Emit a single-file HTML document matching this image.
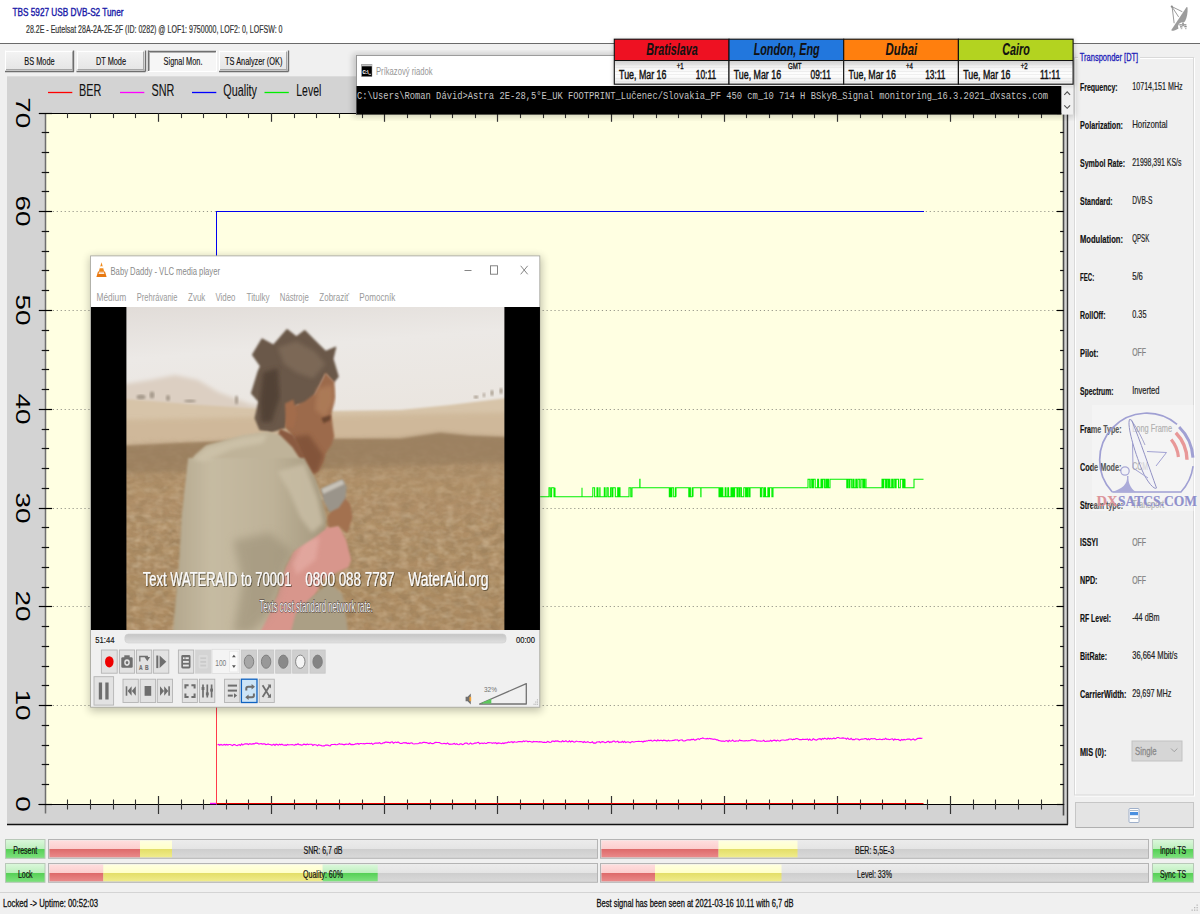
<!DOCTYPE html>
<html lang="sk"><head><meta charset="utf-8"><title>TBS 5927 USB DVB-S2 Tuner</title>
<style>
html,body{margin:0;padding:0;background:#f0f0f0;overflow:hidden}
body{width:1200px;height:914px;font-family:"Liberation Sans",sans-serif}
svg{display:block}
text{white-space:pre}
</style></head><body>
<svg width="1200" height="914" viewBox="0 0 1200 914">
<defs>
<linearGradient id="gbtn" x1="0" y1="0" x2="0" y2="1"><stop offset="0" stop-color="#f4f4f4"/><stop offset="1" stop-color="#e4e4e4"/></linearGradient>
<linearGradient id="ggreen" x1="0" y1="0" x2="0" y2="1"><stop offset="0" stop-color="#dcf8dc"/><stop offset="0.52" stop-color="#bcefbc"/><stop offset="0.52" stop-color="#56d056"/><stop offset="1" stop-color="#7ee27e"/></linearGradient>
<linearGradient id="pgrey" x1="0" y1="0" x2="0" y2="1"><stop offset="0" stop-color="#ececec"/><stop offset="0.52" stop-color="#e4e4e4"/><stop offset="0.52" stop-color="#cecece"/><stop offset="1" stop-color="#dadada"/></linearGradient>
<linearGradient id="pred" x1="0" y1="0" x2="0" y2="1"><stop offset="0" stop-color="#ffdede"/><stop offset="0.52" stop-color="#fbcdcd"/><stop offset="0.52" stop-color="#de6a6a"/><stop offset="1" stop-color="#ea8a8a"/></linearGradient>
<linearGradient id="pyel" x1="0" y1="0" x2="0" y2="1"><stop offset="0" stop-color="#ffffe0"/><stop offset="0.52" stop-color="#ffffc8"/><stop offset="0.52" stop-color="#e4de68"/><stop offset="1" stop-color="#f0ec8c"/></linearGradient>
<linearGradient id="pgrn" x1="0" y1="0" x2="0" y2="1"><stop offset="0" stop-color="#dcf8dc"/><stop offset="0.52" stop-color="#bcefbc"/><stop offset="0.52" stop-color="#56d056"/><stop offset="1" stop-color="#7ee27e"/></linearGradient>
<linearGradient id="gclk" x1="0" y1="0" x2="0" y2="1"><stop offset="0" stop-color="#c8c8c8"/><stop offset="0.3" stop-color="#f4f4f4"/><stop offset="0.6" stop-color="#ffffff"/><stop offset="1" stop-color="#e8e8e8"/></linearGradient>
<linearGradient id="gseek" x1="0" y1="0" x2="0" y2="1"><stop offset="0" stop-color="#c4c4c4"/><stop offset="1" stop-color="#e0e0e0"/></linearGradient>
<filter id="blur2" x="-10%" y="-10%" width="120%" height="120%"><feGaussianBlur stdDeviation="2"/></filter>
<filter id="blur1" x="-10%" y="-10%" width="120%" height="120%"><feGaussianBlur stdDeviation="1"/></filter>
<filter id="blur4" x="-20%" y="-20%" width="140%" height="140%"><feGaussianBlur stdDeviation="4"/></filter>
<filter id="shadow" x="-5%" y="-5%" width="110%" height="110%"><feGaussianBlur stdDeviation="3"/></filter>
<filter id="tsh" x="-5%" y="-20%" width="110%" height="150%"><feDropShadow dx="0.8" dy="0.8" stdDeviation="0.7" flood-color="#2a2018" flood-opacity="0.7"/></filter>
</defs>
<rect x="0.00" y="0.00" width="1200.00" height="914.00" fill="#f0f0f0" />
<rect x="0.00" y="0.00" width="1200.00" height="43.00" fill="#ffffff" />
<line x1="0.00" y1="43.50" x2="1200.00" y2="43.50" stroke="#6a6a6a" stroke-width="1" />
<text x="12.50" y="15.60" textLength="111.00" lengthAdjust="spacingAndGlyphs" fill="#1818a8" style='font-family:"Liberation Sans", sans-serif;font-size:11.3px;'  stroke="#1818a8" stroke-width="0.4">TBS 5927 USB DVB-S2 Tuner</text>
<text x="26.00" y="33.10" textLength="256.50" lengthAdjust="spacingAndGlyphs" fill="#333" style='font-family:"Liberation Sans", sans-serif;font-size:10.4px;'  stroke="#333" stroke-width="0.2">28.2E - Eutelsat 28A-2A-2E-2F (ID: 0282) @ LOF1: 9750000, LOF2: 0, LOFSW: 0</text>
<path d="M1186.6 7 L1187.6 7.6 C1187.8 13 1187 17.5 1185.2 21 L1178.5 28.4 C1176 30 1174 30.6 1171.8 30.8 L1171.3 30 Z" fill="#9c9c9c"/><g stroke="#8e8e8e" stroke-width="0.9" fill="none" stroke-linecap="round"><path d="M1171.9 6.6 L1182 11.6"/><path d="M1172.4 7.4 L1178.4 16.6"/><path d="M1172.2 7.5 L1174.1 22.8"/></g><circle cx="1171.8" cy="6.6" r="1.1" fill="#8a8a8a"/><ellipse cx="1183" cy="26.6" rx="5" ry="4.4" fill="#ffffff"/><g fill="#8e8e8e"><rect x="1179.3" y="24.2" width="2.6" height="1.3"/><rect x="1183.6" y="24.2" width="2.8" height="1.3"/><rect x="1180" y="26.2" width="2.4" height="1.3"/><rect x="1184.3" y="26" width="2.4" height="1.3"/><rect x="1182.2" y="22.6" width="1.6" height="3.6"/><rect x="1180.8" y="28" width="1.5" height="1.2" opacity="0.6"/><rect x="1185" y="28" width="1.5" height="1.2" opacity="0.6"/></g>
<rect x="5.00" y="50.50" width="69.00" height="21.00" fill="url(#gbtn)" />
<line x1="5.00" y1="51.50" x2="74.00" y2="51.50" stroke="#ffffff" stroke-width="1" />
<line x1="5.50" y1="50.50" x2="5.50" y2="71.50" stroke="#ffffff" stroke-width="1" />
<line x1="5.00" y1="71.50" x2="74.00" y2="71.50" stroke="#6e6e6e" stroke-width="1.4" />
<line x1="73.50" y1="50.50" x2="73.50" y2="71.50" stroke="#6e6e6e" stroke-width="1.4" />
<line x1="6.00" y1="69.50" x2="73.00" y2="69.50" stroke="#a8a8a8" stroke-width="1" />
<line x1="72.50" y1="51.50" x2="72.50" y2="70.50" stroke="#a8a8a8" stroke-width="1" />
<text x="24.35" y="64.70" textLength="30.29" lengthAdjust="spacingAndGlyphs" fill="#111" style='font-family:"Liberation Sans", sans-serif;font-size:10.3px;'  stroke="#111" stroke-width="0.15">BS Mode</text>
<rect x="76.50" y="50.50" width="69.00" height="21.00" fill="url(#gbtn)" />
<line x1="76.50" y1="51.50" x2="145.50" y2="51.50" stroke="#ffffff" stroke-width="1" />
<line x1="77.50" y1="50.50" x2="77.50" y2="71.50" stroke="#ffffff" stroke-width="1" />
<line x1="76.50" y1="71.50" x2="145.50" y2="71.50" stroke="#6e6e6e" stroke-width="1.4" />
<line x1="145.50" y1="50.50" x2="145.50" y2="71.50" stroke="#6e6e6e" stroke-width="1.4" />
<line x1="77.50" y1="69.50" x2="144.50" y2="69.50" stroke="#a8a8a8" stroke-width="1" />
<line x1="143.50" y1="51.50" x2="143.50" y2="70.50" stroke="#a8a8a8" stroke-width="1" />
<text x="95.92" y="64.70" textLength="30.15" lengthAdjust="spacingAndGlyphs" fill="#111" style='font-family:"Liberation Sans", sans-serif;font-size:10.3px;'  stroke="#111" stroke-width="0.15">DT Mode</text>
<rect x="148.00" y="50.50" width="68.50" height="21.00" fill="#f6f6f6" />
<line x1="148.00" y1="51.50" x2="216.50" y2="51.50" stroke="#707070" stroke-width="1.4" />
<line x1="148.50" y1="50.50" x2="148.50" y2="71.50" stroke="#707070" stroke-width="1.4" />
<line x1="148.00" y1="71.50" x2="216.50" y2="71.50" stroke="#ffffff" stroke-width="1" />
<line x1="216.50" y1="50.50" x2="216.50" y2="71.50" stroke="#ffffff" stroke-width="1" />
<line x1="149.50" y1="52.50" x2="215.50" y2="52.50" stroke="#b0b0b0" stroke-width="1" />
<line x1="149.50" y1="52.00" x2="149.50" y2="70.50" stroke="#b0b0b0" stroke-width="1" />
<text x="163.60" y="65.30" textLength="38.89" lengthAdjust="spacingAndGlyphs" fill="#111" style='font-family:"Liberation Sans", sans-serif;font-size:10.3px;'  stroke="#111" stroke-width="0.15">Signal Mon.</text>
<rect x="219.00" y="50.50" width="69.50" height="21.00" fill="url(#gbtn)" />
<line x1="219.00" y1="51.50" x2="288.50" y2="51.50" stroke="#ffffff" stroke-width="1" />
<line x1="219.50" y1="50.50" x2="219.50" y2="71.50" stroke="#ffffff" stroke-width="1" />
<line x1="219.00" y1="71.50" x2="288.50" y2="71.50" stroke="#6e6e6e" stroke-width="1.4" />
<line x1="288.50" y1="50.50" x2="288.50" y2="71.50" stroke="#6e6e6e" stroke-width="1.4" />
<line x1="220.00" y1="69.50" x2="287.50" y2="69.50" stroke="#a8a8a8" stroke-width="1" />
<line x1="286.50" y1="51.50" x2="286.50" y2="70.50" stroke="#a8a8a8" stroke-width="1" />
<text x="225.10" y="64.70" textLength="57.30" lengthAdjust="spacingAndGlyphs" fill="#111" style='font-family:"Liberation Sans", sans-serif;font-size:10.3px;'  stroke="#111" stroke-width="0.15">TS Analyzer (OK)</text>
<rect x="7.00" y="76.00" width="1060.50" height="748.50" fill="#d3d3d3" />
<line x1="7.00" y1="824.50" x2="1068.00" y2="824.50" stroke="#111" stroke-width="1.3" />
<line x1="1067.50" y1="76.00" x2="1067.50" y2="824.50" stroke="#333" stroke-width="1.4" />
<line x1="7.00" y1="76.50" x2="1067.50" y2="76.50" stroke="#dcdcdc" stroke-width="1" />
<rect x="45.30" y="113.30" width="1018.40" height="691.20" fill="#ffffe2" />
<line x1="52.80" y1="705.50" x2="1060.70" y2="705.50" stroke="#97978a" stroke-width="1" stroke-dasharray="1.2 2.75"/>
<line x1="52.80" y1="606.50" x2="1060.70" y2="606.50" stroke="#97978a" stroke-width="1" stroke-dasharray="1.2 2.75"/>
<line x1="52.80" y1="508.50" x2="1060.70" y2="508.50" stroke="#97978a" stroke-width="1" stroke-dasharray="1.2 2.75"/>
<line x1="52.80" y1="409.50" x2="1060.70" y2="409.50" stroke="#97978a" stroke-width="1" stroke-dasharray="1.2 2.75"/>
<line x1="52.80" y1="310.50" x2="1060.70" y2="310.50" stroke="#97978a" stroke-width="1" stroke-dasharray="1.2 2.75"/>
<line x1="52.80" y1="211.50" x2="1060.70" y2="211.50" stroke="#97978a" stroke-width="1" stroke-dasharray="1.2 2.75"/>
<line x1="48.00" y1="92.50" x2="72.30" y2="92.50" stroke="#ff0000" stroke-width="1.3" />
<text x="79.00" y="95.90" textLength="22.30" lengthAdjust="spacingAndGlyphs" fill="#111" style='font-family:"Liberation Sans", sans-serif;font-size:16.2px;'  stroke="#111" stroke-width="0.1">BER</text>
<line x1="120.00" y1="92.50" x2="144.30" y2="92.50" stroke="#ff00ff" stroke-width="1.3" />
<text x="151.50" y="95.90" textLength="22.80" lengthAdjust="spacingAndGlyphs" fill="#111" style='font-family:"Liberation Sans", sans-serif;font-size:16.2px;'  stroke="#111" stroke-width="0.1">SNR</text>
<line x1="192.00" y1="92.50" x2="216.30" y2="92.50" stroke="#0000ff" stroke-width="1.3" />
<text x="223.30" y="95.90" textLength="33.70" lengthAdjust="spacingAndGlyphs" fill="#111" style='font-family:"Liberation Sans", sans-serif;font-size:16.2px;'  stroke="#111" stroke-width="0.1">Quality</text>
<line x1="264.50" y1="92.50" x2="288.80" y2="92.50" stroke="#00ee00" stroke-width="1.3" />
<text x="296.30" y="95.90" textLength="25.00" lengthAdjust="spacingAndGlyphs" fill="#111" style='font-family:"Liberation Sans", sans-serif;font-size:16.2px;'  stroke="#111" stroke-width="0.1">Level</text>
<line x1="39.00" y1="113.50" x2="1064.20" y2="113.50" stroke="#000" stroke-width="1.1" />
<line x1="38.50" y1="804.50" x2="1064.20" y2="804.50" stroke="#000" stroke-width="1.1" />
<line x1="45.50" y1="113.30" x2="45.50" y2="813.50" stroke="#6e6e6e" stroke-width="1.5" />
<line x1="1063.50" y1="113.30" x2="1063.50" y2="815.50" stroke="#4a4a4a" stroke-width="1.6" />
<line x1="67.50" y1="799.50" x2="67.50" y2="809.50" stroke="#333" stroke-width="1.1" />
<line x1="67.50" y1="113.30" x2="67.50" y2="118.10" stroke="#333" stroke-width="1.1" />
<line x1="90.50" y1="799.50" x2="90.50" y2="809.50" stroke="#333" stroke-width="1.1" />
<line x1="90.50" y1="113.30" x2="90.50" y2="118.10" stroke="#333" stroke-width="1.1" />
<line x1="113.50" y1="799.50" x2="113.50" y2="809.50" stroke="#333" stroke-width="1.1" />
<line x1="113.50" y1="113.30" x2="113.50" y2="118.10" stroke="#333" stroke-width="1.1" />
<line x1="135.50" y1="799.50" x2="135.50" y2="809.50" stroke="#333" stroke-width="1.1" />
<line x1="135.50" y1="113.30" x2="135.50" y2="118.10" stroke="#333" stroke-width="1.1" />
<line x1="158.50" y1="796.00" x2="158.50" y2="814.00" stroke="#333" stroke-width="1.2" />
<line x1="158.50" y1="113.30" x2="158.50" y2="121.80" stroke="#333" stroke-width="1.2" />
<line x1="181.50" y1="799.50" x2="181.50" y2="809.50" stroke="#333" stroke-width="1.1" />
<line x1="181.50" y1="113.30" x2="181.50" y2="118.10" stroke="#333" stroke-width="1.1" />
<line x1="203.50" y1="799.50" x2="203.50" y2="809.50" stroke="#333" stroke-width="1.1" />
<line x1="203.50" y1="113.30" x2="203.50" y2="118.10" stroke="#333" stroke-width="1.1" />
<line x1="226.50" y1="799.50" x2="226.50" y2="809.50" stroke="#333" stroke-width="1.1" />
<line x1="226.50" y1="113.30" x2="226.50" y2="118.10" stroke="#333" stroke-width="1.1" />
<line x1="248.50" y1="799.50" x2="248.50" y2="809.50" stroke="#333" stroke-width="1.1" />
<line x1="248.50" y1="113.30" x2="248.50" y2="118.10" stroke="#333" stroke-width="1.1" />
<line x1="271.50" y1="796.00" x2="271.50" y2="814.00" stroke="#333" stroke-width="1.2" />
<line x1="271.50" y1="113.30" x2="271.50" y2="121.80" stroke="#333" stroke-width="1.2" />
<line x1="294.50" y1="799.50" x2="294.50" y2="809.50" stroke="#333" stroke-width="1.1" />
<line x1="294.50" y1="113.30" x2="294.50" y2="118.10" stroke="#333" stroke-width="1.1" />
<line x1="316.50" y1="799.50" x2="316.50" y2="809.50" stroke="#333" stroke-width="1.1" />
<line x1="316.50" y1="113.30" x2="316.50" y2="118.10" stroke="#333" stroke-width="1.1" />
<line x1="339.50" y1="799.50" x2="339.50" y2="809.50" stroke="#333" stroke-width="1.1" />
<line x1="339.50" y1="113.30" x2="339.50" y2="118.10" stroke="#333" stroke-width="1.1" />
<line x1="362.50" y1="799.50" x2="362.50" y2="809.50" stroke="#333" stroke-width="1.1" />
<line x1="362.50" y1="113.30" x2="362.50" y2="118.10" stroke="#333" stroke-width="1.1" />
<line x1="384.50" y1="796.00" x2="384.50" y2="814.00" stroke="#333" stroke-width="1.2" />
<line x1="384.50" y1="113.30" x2="384.50" y2="121.80" stroke="#333" stroke-width="1.2" />
<line x1="407.50" y1="799.50" x2="407.50" y2="809.50" stroke="#333" stroke-width="1.1" />
<line x1="407.50" y1="113.30" x2="407.50" y2="118.10" stroke="#333" stroke-width="1.1" />
<line x1="430.50" y1="799.50" x2="430.50" y2="809.50" stroke="#333" stroke-width="1.1" />
<line x1="430.50" y1="113.30" x2="430.50" y2="118.10" stroke="#333" stroke-width="1.1" />
<line x1="452.50" y1="799.50" x2="452.50" y2="809.50" stroke="#333" stroke-width="1.1" />
<line x1="452.50" y1="113.30" x2="452.50" y2="118.10" stroke="#333" stroke-width="1.1" />
<line x1="475.50" y1="799.50" x2="475.50" y2="809.50" stroke="#333" stroke-width="1.1" />
<line x1="475.50" y1="113.30" x2="475.50" y2="118.10" stroke="#333" stroke-width="1.1" />
<line x1="497.50" y1="796.00" x2="497.50" y2="814.00" stroke="#333" stroke-width="1.2" />
<line x1="497.50" y1="113.30" x2="497.50" y2="121.80" stroke="#333" stroke-width="1.2" />
<line x1="520.50" y1="799.50" x2="520.50" y2="809.50" stroke="#333" stroke-width="1.1" />
<line x1="520.50" y1="113.30" x2="520.50" y2="118.10" stroke="#333" stroke-width="1.1" />
<line x1="543.50" y1="799.50" x2="543.50" y2="809.50" stroke="#333" stroke-width="1.1" />
<line x1="543.50" y1="113.30" x2="543.50" y2="118.10" stroke="#333" stroke-width="1.1" />
<line x1="565.50" y1="799.50" x2="565.50" y2="809.50" stroke="#333" stroke-width="1.1" />
<line x1="565.50" y1="113.30" x2="565.50" y2="118.10" stroke="#333" stroke-width="1.1" />
<line x1="588.50" y1="799.50" x2="588.50" y2="809.50" stroke="#333" stroke-width="1.1" />
<line x1="588.50" y1="113.30" x2="588.50" y2="118.10" stroke="#333" stroke-width="1.1" />
<line x1="611.50" y1="796.00" x2="611.50" y2="814.00" stroke="#333" stroke-width="1.2" />
<line x1="611.50" y1="113.30" x2="611.50" y2="121.80" stroke="#333" stroke-width="1.2" />
<line x1="633.50" y1="799.50" x2="633.50" y2="809.50" stroke="#333" stroke-width="1.1" />
<line x1="633.50" y1="113.30" x2="633.50" y2="118.10" stroke="#333" stroke-width="1.1" />
<line x1="656.50" y1="799.50" x2="656.50" y2="809.50" stroke="#333" stroke-width="1.1" />
<line x1="656.50" y1="113.30" x2="656.50" y2="118.10" stroke="#333" stroke-width="1.1" />
<line x1="678.50" y1="799.50" x2="678.50" y2="809.50" stroke="#333" stroke-width="1.1" />
<line x1="678.50" y1="113.30" x2="678.50" y2="118.10" stroke="#333" stroke-width="1.1" />
<line x1="701.50" y1="799.50" x2="701.50" y2="809.50" stroke="#333" stroke-width="1.1" />
<line x1="701.50" y1="113.30" x2="701.50" y2="118.10" stroke="#333" stroke-width="1.1" />
<line x1="724.50" y1="796.00" x2="724.50" y2="814.00" stroke="#333" stroke-width="1.2" />
<line x1="724.50" y1="113.30" x2="724.50" y2="121.80" stroke="#333" stroke-width="1.2" />
<line x1="746.50" y1="799.50" x2="746.50" y2="809.50" stroke="#333" stroke-width="1.1" />
<line x1="746.50" y1="113.30" x2="746.50" y2="118.10" stroke="#333" stroke-width="1.1" />
<line x1="769.50" y1="799.50" x2="769.50" y2="809.50" stroke="#333" stroke-width="1.1" />
<line x1="769.50" y1="113.30" x2="769.50" y2="118.10" stroke="#333" stroke-width="1.1" />
<line x1="792.50" y1="799.50" x2="792.50" y2="809.50" stroke="#333" stroke-width="1.1" />
<line x1="792.50" y1="113.30" x2="792.50" y2="118.10" stroke="#333" stroke-width="1.1" />
<line x1="814.50" y1="799.50" x2="814.50" y2="809.50" stroke="#333" stroke-width="1.1" />
<line x1="814.50" y1="113.30" x2="814.50" y2="118.10" stroke="#333" stroke-width="1.1" />
<line x1="837.50" y1="796.00" x2="837.50" y2="814.00" stroke="#333" stroke-width="1.2" />
<line x1="837.50" y1="113.30" x2="837.50" y2="121.80" stroke="#333" stroke-width="1.2" />
<line x1="860.50" y1="799.50" x2="860.50" y2="809.50" stroke="#333" stroke-width="1.1" />
<line x1="860.50" y1="113.30" x2="860.50" y2="118.10" stroke="#333" stroke-width="1.1" />
<line x1="882.50" y1="799.50" x2="882.50" y2="809.50" stroke="#333" stroke-width="1.1" />
<line x1="882.50" y1="113.30" x2="882.50" y2="118.10" stroke="#333" stroke-width="1.1" />
<line x1="905.50" y1="799.50" x2="905.50" y2="809.50" stroke="#333" stroke-width="1.1" />
<line x1="905.50" y1="113.30" x2="905.50" y2="118.10" stroke="#333" stroke-width="1.1" />
<line x1="927.50" y1="799.50" x2="927.50" y2="809.50" stroke="#333" stroke-width="1.1" />
<line x1="927.50" y1="113.30" x2="927.50" y2="118.10" stroke="#333" stroke-width="1.1" />
<line x1="950.50" y1="796.00" x2="950.50" y2="814.00" stroke="#333" stroke-width="1.2" />
<line x1="950.50" y1="113.30" x2="950.50" y2="121.80" stroke="#333" stroke-width="1.2" />
<line x1="973.50" y1="799.50" x2="973.50" y2="809.50" stroke="#333" stroke-width="1.1" />
<line x1="973.50" y1="113.30" x2="973.50" y2="118.10" stroke="#333" stroke-width="1.1" />
<line x1="995.50" y1="799.50" x2="995.50" y2="809.50" stroke="#333" stroke-width="1.1" />
<line x1="995.50" y1="113.30" x2="995.50" y2="118.10" stroke="#333" stroke-width="1.1" />
<line x1="1018.50" y1="799.50" x2="1018.50" y2="809.50" stroke="#333" stroke-width="1.1" />
<line x1="1018.50" y1="113.30" x2="1018.50" y2="118.10" stroke="#333" stroke-width="1.1" />
<line x1="1041.50" y1="799.50" x2="1041.50" y2="809.50" stroke="#333" stroke-width="1.1" />
<line x1="1041.50" y1="113.30" x2="1041.50" y2="118.10" stroke="#333" stroke-width="1.1" />
<line x1="38.80" y1="804.50" x2="52.10" y2="804.50" stroke="#000" stroke-width="1.2" />
<line x1="1056.70" y1="804.50" x2="1063.70" y2="804.50" stroke="#000" stroke-width="1.2" />
<line x1="41.70" y1="784.50" x2="49.10" y2="784.50" stroke="#111" stroke-width="1.2" />
<line x1="1060.10" y1="784.50" x2="1063.70" y2="784.50" stroke="#111" stroke-width="1.2" />
<line x1="41.70" y1="764.50" x2="49.10" y2="764.50" stroke="#111" stroke-width="1.2" />
<line x1="1060.10" y1="764.50" x2="1063.70" y2="764.50" stroke="#111" stroke-width="1.2" />
<line x1="41.70" y1="745.50" x2="49.10" y2="745.50" stroke="#111" stroke-width="1.2" />
<line x1="1060.10" y1="745.50" x2="1063.70" y2="745.50" stroke="#111" stroke-width="1.2" />
<line x1="41.70" y1="725.50" x2="49.10" y2="725.50" stroke="#111" stroke-width="1.2" />
<line x1="1060.10" y1="725.50" x2="1063.70" y2="725.50" stroke="#111" stroke-width="1.2" />
<line x1="38.80" y1="705.50" x2="52.10" y2="705.50" stroke="#000" stroke-width="1.2" />
<line x1="1056.70" y1="705.50" x2="1063.70" y2="705.50" stroke="#000" stroke-width="1.2" />
<line x1="41.70" y1="685.50" x2="49.10" y2="685.50" stroke="#111" stroke-width="1.2" />
<line x1="1060.10" y1="685.50" x2="1063.70" y2="685.50" stroke="#111" stroke-width="1.2" />
<line x1="41.70" y1="666.50" x2="49.10" y2="666.50" stroke="#111" stroke-width="1.2" />
<line x1="1060.10" y1="666.50" x2="1063.70" y2="666.50" stroke="#111" stroke-width="1.2" />
<line x1="41.70" y1="646.50" x2="49.10" y2="646.50" stroke="#111" stroke-width="1.2" />
<line x1="1060.10" y1="646.50" x2="1063.70" y2="646.50" stroke="#111" stroke-width="1.2" />
<line x1="41.70" y1="626.50" x2="49.10" y2="626.50" stroke="#111" stroke-width="1.2" />
<line x1="1060.10" y1="626.50" x2="1063.70" y2="626.50" stroke="#111" stroke-width="1.2" />
<line x1="38.80" y1="606.50" x2="52.10" y2="606.50" stroke="#000" stroke-width="1.2" />
<line x1="1056.70" y1="606.50" x2="1063.70" y2="606.50" stroke="#000" stroke-width="1.2" />
<line x1="41.70" y1="587.50" x2="49.10" y2="587.50" stroke="#111" stroke-width="1.2" />
<line x1="1060.10" y1="587.50" x2="1063.70" y2="587.50" stroke="#111" stroke-width="1.2" />
<line x1="41.70" y1="567.50" x2="49.10" y2="567.50" stroke="#111" stroke-width="1.2" />
<line x1="1060.10" y1="567.50" x2="1063.70" y2="567.50" stroke="#111" stroke-width="1.2" />
<line x1="41.70" y1="547.50" x2="49.10" y2="547.50" stroke="#111" stroke-width="1.2" />
<line x1="1060.10" y1="547.50" x2="1063.70" y2="547.50" stroke="#111" stroke-width="1.2" />
<line x1="41.70" y1="527.50" x2="49.10" y2="527.50" stroke="#111" stroke-width="1.2" />
<line x1="1060.10" y1="527.50" x2="1063.70" y2="527.50" stroke="#111" stroke-width="1.2" />
<line x1="38.80" y1="508.50" x2="52.10" y2="508.50" stroke="#000" stroke-width="1.2" />
<line x1="1056.70" y1="508.50" x2="1063.70" y2="508.50" stroke="#000" stroke-width="1.2" />
<line x1="41.70" y1="488.50" x2="49.10" y2="488.50" stroke="#111" stroke-width="1.2" />
<line x1="1060.10" y1="488.50" x2="1063.70" y2="488.50" stroke="#111" stroke-width="1.2" />
<line x1="41.70" y1="468.50" x2="49.10" y2="468.50" stroke="#111" stroke-width="1.2" />
<line x1="1060.10" y1="468.50" x2="1063.70" y2="468.50" stroke="#111" stroke-width="1.2" />
<line x1="41.70" y1="448.50" x2="49.10" y2="448.50" stroke="#111" stroke-width="1.2" />
<line x1="1060.10" y1="448.50" x2="1063.70" y2="448.50" stroke="#111" stroke-width="1.2" />
<line x1="41.70" y1="429.50" x2="49.10" y2="429.50" stroke="#111" stroke-width="1.2" />
<line x1="1060.10" y1="429.50" x2="1063.70" y2="429.50" stroke="#111" stroke-width="1.2" />
<line x1="38.80" y1="409.50" x2="52.10" y2="409.50" stroke="#000" stroke-width="1.2" />
<line x1="1056.70" y1="409.50" x2="1063.70" y2="409.50" stroke="#000" stroke-width="1.2" />
<line x1="41.70" y1="389.50" x2="49.10" y2="389.50" stroke="#111" stroke-width="1.2" />
<line x1="1060.10" y1="389.50" x2="1063.70" y2="389.50" stroke="#111" stroke-width="1.2" />
<line x1="41.70" y1="369.50" x2="49.10" y2="369.50" stroke="#111" stroke-width="1.2" />
<line x1="1060.10" y1="369.50" x2="1063.70" y2="369.50" stroke="#111" stroke-width="1.2" />
<line x1="41.70" y1="350.50" x2="49.10" y2="350.50" stroke="#111" stroke-width="1.2" />
<line x1="1060.10" y1="350.50" x2="1063.70" y2="350.50" stroke="#111" stroke-width="1.2" />
<line x1="41.70" y1="330.50" x2="49.10" y2="330.50" stroke="#111" stroke-width="1.2" />
<line x1="1060.10" y1="330.50" x2="1063.70" y2="330.50" stroke="#111" stroke-width="1.2" />
<line x1="38.80" y1="310.50" x2="52.10" y2="310.50" stroke="#000" stroke-width="1.2" />
<line x1="1056.70" y1="310.50" x2="1063.70" y2="310.50" stroke="#000" stroke-width="1.2" />
<line x1="41.70" y1="290.50" x2="49.10" y2="290.50" stroke="#111" stroke-width="1.2" />
<line x1="1060.10" y1="290.50" x2="1063.70" y2="290.50" stroke="#111" stroke-width="1.2" />
<line x1="41.70" y1="270.50" x2="49.10" y2="270.50" stroke="#111" stroke-width="1.2" />
<line x1="1060.10" y1="270.50" x2="1063.70" y2="270.50" stroke="#111" stroke-width="1.2" />
<line x1="41.70" y1="251.50" x2="49.10" y2="251.50" stroke="#111" stroke-width="1.2" />
<line x1="1060.10" y1="251.50" x2="1063.70" y2="251.50" stroke="#111" stroke-width="1.2" />
<line x1="41.70" y1="231.50" x2="49.10" y2="231.50" stroke="#111" stroke-width="1.2" />
<line x1="1060.10" y1="231.50" x2="1063.70" y2="231.50" stroke="#111" stroke-width="1.2" />
<line x1="38.80" y1="211.50" x2="52.10" y2="211.50" stroke="#000" stroke-width="1.2" />
<line x1="1056.70" y1="211.50" x2="1063.70" y2="211.50" stroke="#000" stroke-width="1.2" />
<line x1="41.70" y1="191.50" x2="49.10" y2="191.50" stroke="#111" stroke-width="1.2" />
<line x1="1060.10" y1="191.50" x2="1063.70" y2="191.50" stroke="#111" stroke-width="1.2" />
<line x1="41.70" y1="172.50" x2="49.10" y2="172.50" stroke="#111" stroke-width="1.2" />
<line x1="1060.10" y1="172.50" x2="1063.70" y2="172.50" stroke="#111" stroke-width="1.2" />
<line x1="41.70" y1="152.50" x2="49.10" y2="152.50" stroke="#111" stroke-width="1.2" />
<line x1="1060.10" y1="152.50" x2="1063.70" y2="152.50" stroke="#111" stroke-width="1.2" />
<line x1="41.70" y1="132.50" x2="49.10" y2="132.50" stroke="#111" stroke-width="1.2" />
<line x1="1060.10" y1="132.50" x2="1063.70" y2="132.50" stroke="#111" stroke-width="1.2" />
<line x1="38.80" y1="113.50" x2="52.10" y2="113.50" stroke="#000" stroke-width="1.2" />
<line x1="1056.70" y1="113.50" x2="1063.70" y2="113.50" stroke="#000" stroke-width="1.2" />
<text transform="translate(15.75,804.00) rotate(90)" x="-7.75" y="0" textLength="15.50" lengthAdjust="spacingAndGlyphs" fill="#000" style='font-family:"Liberation Sans",sans-serif;font-size:19.4px'>0</text>
<text transform="translate(15.75,705.00) rotate(90)" x="-15.50" y="0" textLength="31.00" lengthAdjust="spacingAndGlyphs" fill="#000" style='font-family:"Liberation Sans",sans-serif;font-size:19.4px'>10</text>
<text transform="translate(15.75,606.00) rotate(90)" x="-15.50" y="0" textLength="31.00" lengthAdjust="spacingAndGlyphs" fill="#000" style='font-family:"Liberation Sans",sans-serif;font-size:19.4px'>20</text>
<text transform="translate(15.75,508.00) rotate(90)" x="-15.50" y="0" textLength="31.00" lengthAdjust="spacingAndGlyphs" fill="#000" style='font-family:"Liberation Sans",sans-serif;font-size:19.4px'>30</text>
<text transform="translate(15.75,409.00) rotate(90)" x="-15.50" y="0" textLength="31.00" lengthAdjust="spacingAndGlyphs" fill="#000" style='font-family:"Liberation Sans",sans-serif;font-size:19.4px'>40</text>
<text transform="translate(15.75,310.00) rotate(90)" x="-15.50" y="0" textLength="31.00" lengthAdjust="spacingAndGlyphs" fill="#000" style='font-family:"Liberation Sans",sans-serif;font-size:19.4px'>50</text>
<text transform="translate(15.75,211.00) rotate(90)" x="-15.50" y="0" textLength="31.00" lengthAdjust="spacingAndGlyphs" fill="#000" style='font-family:"Liberation Sans",sans-serif;font-size:19.4px'>60</text>
<text transform="translate(15.75,112.80) rotate(90)" x="-15.50" y="0" textLength="31.00" lengthAdjust="spacingAndGlyphs" fill="#000" style='font-family:"Liberation Sans",sans-serif;font-size:19.4px'>70</text>
<line x1="216.50" y1="803.50" x2="923.50" y2="803.50" stroke="#e80000" stroke-width="1.0" />
<line x1="210.00" y1="803.50" x2="216.50" y2="803.50" stroke="#ff00ff" stroke-width="1.4" />
<polyline points="216.5,804.5 216.5,211.50 923.5,211.50" fill="none" stroke="#0000f0" stroke-width="1" shape-rendering="crispEdges"/>
<line x1="216.50" y1="400.00" x2="216.50" y2="804.50" stroke="#ff3a4a" stroke-width="1.0" />
<polyline points="217.5,744.72 218.7,744.47 219.8,745.23 221.0,744.37 222.1,745.09 223.3,744.85 224.4,744.41 225.6,745.10 226.7,744.41 227.9,745.02 229.0,744.48 230.2,744.51 231.3,745.00 232.5,745.58 233.6,744.50 234.8,744.61 235.9,745.18 237.1,745.60 238.2,744.98 239.4,744.64 240.5,745.44 241.7,743.96 242.8,745.09 244.0,744.15 245.1,743.85 246.3,743.72 247.4,743.92 248.6,744.60 249.7,743.58 250.9,744.12 252.0,744.15 253.2,743.70 254.3,743.93 255.5,743.18 256.6,743.16 257.8,743.38 258.9,744.11 260.1,743.75 261.2,743.62 262.4,744.07 263.5,743.93 264.7,743.76 265.8,744.57 266.9,744.50 268.1,743.89 269.2,744.46 270.4,744.46 271.5,745.06 272.7,744.91 273.8,744.31 275.0,745.40 276.1,744.15 277.3,744.64 278.4,745.18 279.6,744.29 280.7,744.80 281.9,744.13 283.0,745.06 284.2,745.19 285.3,744.88 286.5,745.30 287.6,744.42 288.8,744.96 289.9,744.76 291.1,744.70 292.2,744.48 293.4,745.02 294.5,745.14 295.7,744.41 296.8,744.68 298.0,743.76 299.1,744.72 300.3,744.65 301.4,745.18 302.6,744.95 303.7,744.18 304.9,744.38 306.0,744.86 307.2,743.95 308.3,744.67 309.5,744.30 310.6,744.29 311.8,744.28 312.9,745.42 314.1,744.53 315.2,744.77 316.4,745.05 317.5,745.82 318.7,744.68 319.8,745.26 321.0,745.43 322.1,745.95 323.3,745.85 324.4,745.90 325.6,745.00 326.7,745.17 327.9,745.03 329.0,745.76 330.2,745.81 331.3,744.52 332.5,744.48 333.6,744.48 334.8,744.39 335.9,744.68 337.1,744.74 338.2,744.16 339.4,743.69 340.5,744.24 341.7,744.09 342.8,744.32 344.0,744.84 345.1,744.40 346.3,744.10 347.4,744.22 348.6,744.29 349.7,743.35 350.9,744.61 352.0,744.44 353.2,744.59 354.3,744.49 355.5,743.90 356.6,743.93 357.8,743.50 358.9,744.32 360.1,743.47 361.2,743.49 362.4,743.71 363.5,743.63 364.7,743.89 365.8,743.44 367.0,743.33 368.1,743.51 369.3,743.39 370.4,743.72 371.6,743.14 372.7,744.34 373.9,743.86 375.0,743.07 376.2,743.13 377.3,743.18 378.5,743.10 379.6,742.64 380.8,743.63 381.9,743.75 383.1,742.87 384.2,742.81 385.4,742.14 386.5,742.10 387.7,742.41 388.8,742.25 390.0,743.06 391.1,742.04 392.3,741.83 393.4,743.22 394.6,742.60 395.7,742.06 396.9,742.69 398.0,741.96 399.2,742.76 400.3,743.49 401.5,743.38 402.6,743.19 403.8,742.59 404.9,742.81 406.1,742.57 407.2,743.53 408.4,743.21 409.5,743.62 410.7,742.98 411.8,742.84 413.0,743.73 414.1,743.99 415.3,743.79 416.4,743.71 417.6,743.70 418.7,743.56 419.9,742.75 421.0,743.15 422.2,742.86 423.3,742.33 424.5,742.28 425.6,742.62 426.8,742.55 427.9,743.17 429.1,743.53 430.2,742.75 431.4,743.47 432.5,743.55 433.7,743.50 434.8,742.64 436.0,742.45 437.1,742.50 438.3,742.50 439.4,742.57 440.6,743.26 441.7,743.75 442.9,743.74 444.0,743.28 445.2,743.62 446.3,743.92 447.5,742.93 448.6,743.88 449.8,744.32 450.9,744.20 452.1,744.21 453.2,743.86 454.4,743.45 455.5,744.40 456.7,743.73 457.8,744.44 459.0,744.69 460.1,743.81 461.3,743.79 462.4,744.57 463.6,744.19 464.7,743.30 465.9,743.17 467.0,743.14 468.2,744.20 469.3,743.98 470.5,742.91 471.6,743.86 472.8,744.02 473.9,743.47 475.1,742.95 476.2,743.19 477.4,742.52 478.5,742.30 479.7,743.71 480.8,743.21 482.0,743.01 483.1,743.62 484.3,742.87 485.4,743.54 486.6,743.49 487.7,742.59 488.9,742.68 490.0,742.76 491.2,742.71 492.3,743.25 493.5,742.78 494.6,743.04 495.8,742.62 496.9,743.79 498.1,742.95 499.2,743.09 500.4,743.25 501.5,743.69 502.7,742.92 503.8,743.61 505.0,742.91 506.1,742.88 507.3,742.78 508.4,741.93 509.6,742.46 510.7,741.97 511.9,741.59 513.0,742.68 514.2,741.63 515.3,741.97 516.5,742.25 517.6,741.90 518.8,741.47 519.9,741.67 521.1,741.66 522.2,741.94 523.4,740.87 524.5,741.52 525.7,741.03 526.8,741.05 528.0,741.79 529.1,741.40 530.3,741.50 531.4,741.82 532.6,742.09 533.7,741.42 534.9,741.71 536.0,741.60 537.2,741.65 538.3,741.97 539.5,741.65 540.6,741.81 541.8,741.75 542.9,742.47 544.1,742.13 545.2,742.40 546.4,742.50 547.5,741.47 548.7,741.90 549.8,742.46 551.0,742.27 552.1,741.17 553.3,741.11 554.4,741.54 555.6,740.93 556.7,741.13 557.9,740.82 559.0,741.67 560.2,741.79 561.3,741.91 562.5,740.76 563.6,741.58 564.8,741.47 565.9,740.68 567.1,741.79 568.2,741.93 569.4,740.83 570.5,741.96 571.7,741.17 572.8,741.36 574.0,742.18 575.1,742.01 576.3,741.08 577.4,741.57 578.6,741.78 579.7,741.61 580.9,741.48 582.0,741.75 583.2,742.44 584.3,741.46 585.5,742.34 586.6,742.23 587.8,741.65 588.9,742.17 590.1,742.64 591.2,742.49 592.4,741.83 593.5,743.21 594.7,742.91 595.8,743.16 597.0,741.83 598.1,742.03 599.3,741.65 600.4,742.70 601.6,741.89 602.7,741.62 603.9,742.00 605.0,742.67 606.2,742.48 607.3,741.58 608.5,741.37 609.6,742.49 610.8,741.93 611.9,742.10 613.1,741.17 614.2,741.11 615.4,742.06 616.5,741.68 617.7,741.16 618.8,742.49 620.0,742.06 621.1,742.34 622.3,741.30 623.4,742.50 624.6,741.36 625.7,742.59 626.9,742.01 628.0,741.87 629.2,742.21 630.3,742.79 631.5,741.80 632.6,741.59 633.8,742.17 634.9,741.71 636.1,741.48 637.2,741.51 638.4,741.29 639.5,741.44 640.7,741.53 641.8,741.43 643.0,742.01 644.1,741.21 645.3,741.41 646.4,740.82 647.6,740.96 648.7,740.36 649.9,740.60 651.0,740.15 652.2,741.13 653.3,740.77 654.5,740.14 655.6,740.50 656.8,741.13 657.9,739.84 659.1,740.87 660.2,740.26 661.4,740.33 662.5,740.84 663.7,740.18 664.8,740.36 666.0,740.64 667.1,741.11 668.3,740.18 669.4,740.94 670.6,740.78 671.7,740.71 672.9,740.39 674.0,740.32 675.2,739.90 676.3,740.03 677.5,739.94 678.6,740.95 679.8,740.21 680.9,740.05 682.1,739.90 683.2,741.00 684.4,740.99 685.5,740.64 686.7,740.00 687.8,739.88 689.0,739.89 690.1,740.05 691.3,739.41 692.4,739.66 693.6,739.20 694.7,740.08 695.9,739.94 697.0,739.17 698.2,738.59 699.3,739.57 700.5,738.51 701.6,738.53 702.8,737.97 703.9,738.54 705.1,738.70 706.2,738.80 707.4,738.42 708.5,738.97 709.7,738.34 710.8,738.87 712.0,738.77 713.1,739.40 714.3,739.05 715.4,739.21 716.6,739.82 717.7,739.91 718.9,740.63 720.0,740.73 721.2,741.13 722.3,741.04 723.5,741.17 724.6,741.44 725.8,740.73 726.9,740.65 728.1,741.63 729.2,740.37 730.4,741.21 731.5,741.07 732.7,740.13 733.8,741.28 735.0,741.32 736.1,740.88 737.3,740.99 738.4,741.06 739.6,740.01 740.7,740.55 741.9,740.48 743.0,740.95 744.2,740.88 745.3,740.90 746.5,740.53 747.6,741.00 748.8,740.70 749.9,740.74 751.1,740.07 752.2,739.81 753.4,740.01 754.5,740.40 755.7,740.07 756.8,741.22 758.0,740.86 759.1,741.02 760.3,741.06 761.4,741.19 762.6,740.95 763.7,740.25 764.9,741.46 766.0,741.40 767.2,741.04 768.3,741.08 769.5,741.24 770.6,740.32 771.8,741.28 772.9,740.50 774.1,740.17 775.2,740.38 776.4,740.99 777.5,740.11 778.7,740.81 779.8,741.07 781.0,740.24 782.1,739.97 783.3,740.01 784.4,740.22 785.6,740.24 786.7,739.93 787.9,739.89 789.0,738.96 790.2,739.00 791.3,739.11 792.5,739.80 793.6,739.10 794.8,739.47 795.9,738.63 797.1,738.69 798.2,739.01 799.4,739.62 800.5,739.66 801.7,739.66 802.8,739.10 804.0,739.46 805.1,739.40 806.3,739.42 807.4,738.91 808.6,740.09 809.7,739.05 810.9,740.21 812.0,740.13 813.2,738.73 814.3,739.36 815.5,739.86 816.6,740.04 817.8,739.20 818.9,738.86 820.1,738.70 821.2,739.73 822.4,738.54 823.5,739.02 824.7,738.27 825.8,738.76 827.0,739.32 828.1,738.01 829.3,738.97 830.4,738.44 831.6,738.95 832.7,738.63 833.9,737.89 835.0,738.87 836.2,738.24 837.3,737.55 838.5,737.53 839.6,738.28 840.8,738.26 841.9,738.08 843.1,737.89 844.2,738.26 845.4,738.29 846.5,739.15 847.7,737.96 848.8,739.17 850.0,739.37 851.1,738.37 852.3,739.65 853.4,739.40 854.6,739.74 855.7,738.87 856.9,739.04 858.0,739.10 859.2,740.03 860.3,739.43 861.5,739.09 862.6,739.18 863.8,738.94 864.9,738.58 866.1,738.63 867.2,739.69 868.4,738.83 869.5,739.77 870.7,738.70 871.8,738.68 873.0,739.01 874.1,738.50 875.3,738.74 876.4,739.60 877.6,739.47 878.7,739.36 879.9,739.09 881.0,739.53 882.2,739.59 883.3,739.04 884.5,739.33 885.6,738.37 886.8,739.45 887.9,739.09 889.1,739.61 890.2,739.52 891.4,739.05 892.5,738.77 893.7,740.15 894.8,739.02 896.0,739.59 897.1,739.45 898.3,739.43 899.4,740.12 900.6,740.50 901.7,739.44 902.9,740.03 904.0,739.49 905.2,739.85 906.3,739.57 907.5,739.18 908.6,739.11 909.8,739.11 910.9,740.08 912.1,739.39 913.2,738.88 914.4,739.82 915.5,739.86 916.7,738.95 917.8,738.40 919.0,738.39 920.1,738.15 921.3,738.45 922.4,738.01" fill="none" stroke="#ff00ff" stroke-width="1.15"/>
<polyline points="540.0,496.8 548.0,496.8 548.0,496.8 549.0,496.8 549.0,487.8 550.3,487.8 550.3,496.8 551.6,496.8 551.6,487.8 554.0,487.8 554.0,496.8 555.0,496.8 555.0,487.8 555.0,487.8 555.0,496.8 555.0,496.8 555.0,496.8 580.5,496.8 580.5,496.8 582.0,496.8 582.0,487.8 582.0,496.8 582.0,496.8 591.0,496.8 591.0,496.8 592.8,496.8 592.8,487.8 594.6,487.8 594.6,496.8 597.0,496.8 597.0,487.8 598.0,487.8 598.0,496.8 599.8,496.8 599.8,487.8 600.0,487.8 600.0,496.8 600.0,496.8 600.0,496.8 603.0,496.8 603.0,496.8 604.3,496.8 604.3,487.8 605.1,487.8 605.1,496.8 606.9,496.8 606.9,487.8 608.2,487.8 608.2,496.8 610.6,496.8 610.6,487.8 611.9,487.8 611.9,496.8 612.9,496.8 612.9,487.8 615.3,487.8 615.3,496.8 617.7,496.8 617.7,487.8 618.7,487.8 618.7,496.8 619.5,496.8 619.5,487.8 620.0,487.8 620.0,496.8 620.0,496.8 620.0,496.8 628.0,496.8 628.0,496.8 629.0,496.8 629.0,487.8 630.8,487.8 630.8,496.8 632.0,496.8 632.0,487.8 632.0,496.8 632.0,487.8 638.0,487.8 638.0,487.8 639.8,487.8 639.8,479.2 640.0,479.2 640.0,487.8 640.0,487.8 640.0,487.8 668.0,487.8 668.0,487.8 669.3,487.8 669.3,496.8 670.1,496.8 670.1,487.8 671.1,487.8 671.1,496.8 671.9,496.8 671.9,487.8 673.7,487.8 673.7,496.8 675.5,496.8 675.5,487.8 676.0,487.8 676.0,496.8 676.0,487.8 676.0,487.8 687.0,487.8 687.0,487.8 688.8,487.8 688.8,496.8 689.6,496.8 689.6,487.8 690.4,487.8 690.4,496.8 692.2,496.8 692.2,487.8 693.0,487.8 693.0,496.8 693.0,487.8 693.0,487.8 699.0,487.8 699.0,487.8 700.8,487.8 700.8,496.8 701.0,496.8 701.0,487.8 701.0,487.8 701.0,487.8 718.0,487.8 718.0,487.8 719.0,487.8 719.0,496.8 719.8,496.8 719.8,487.8 720.8,487.8 720.8,496.8 721.8,496.8 721.8,487.8 722.8,487.8 722.8,496.8 725.2,496.8 725.2,487.8 726.0,487.8 726.0,496.8 727.8,496.8 727.8,487.8 728.6,487.8 728.6,496.8 731.0,496.8 731.0,487.8 731.8,487.8 731.8,496.8 732.6,496.8 732.6,487.8 733.6,487.8 733.6,496.8 734.6,496.8 734.6,487.8 737.0,487.8 737.0,496.8 737.8,496.8 737.8,487.8 739.1,487.8 739.1,496.8 740.1,496.8 740.1,487.8 741.4,487.8 741.4,496.8 743.8,496.8 743.8,487.8 745.6,487.8 745.6,496.8 746.4,496.8 746.4,487.8 747.2,487.8 747.2,496.8 748.0,496.8 748.0,487.8 749.3,487.8 749.3,496.8 750.0,496.8 750.0,487.8 750.0,487.8 750.0,487.8 758.0,487.8 758.0,487.8 760.4,487.8 760.4,496.8 761.4,496.8 761.4,487.8 763.2,487.8 763.2,496.8 764.5,496.8 764.5,487.8 765.5,487.8 765.5,496.8 767.9,496.8 767.9,487.8 768.7,487.8 768.7,496.8 769.5,496.8 769.5,487.8 771.9,487.8 771.9,496.8 773.0,496.8 773.0,487.8 773.0,487.8 773.0,487.8 808.0,487.8 808.0,479.2 809.8,479.2 809.8,487.8 811.1,487.8 811.1,479.2 812.4,479.2 812.4,487.8 813.4,487.8 813.4,479.2 815.2,479.2 815.2,487.8 817.6,487.8 817.6,479.2 818.6,479.2 818.6,487.8 821.0,487.8 821.0,479.2 822.0,479.2 822.0,487.8 822.8,487.8 822.8,479.2 824.6,479.2 824.6,487.8 825.9,487.8 825.9,479.2 826.7,479.2 826.7,487.8 827.5,487.8 827.5,479.2 828.5,479.2 828.5,487.8 830.0,487.8 830.0,479.2 830.0,479.2 830.0,479.2 845.0,479.2 845.0,479.2 846.8,479.2 846.8,487.8 847.6,487.8 847.6,479.2 848.9,479.2 848.9,487.8 849.9,487.8 849.9,479.2 851.7,479.2 851.7,487.8 853.0,487.8 853.0,479.2 854.0,479.2 854.0,487.8 855.8,487.8 855.8,479.2 856.6,479.2 856.6,487.8 857.9,487.8 857.9,479.2 859.7,479.2 859.7,487.8 861.0,487.8 861.0,479.2 862.8,479.2 862.8,487.8 863.8,487.8 863.8,479.2 864.6,479.2 864.6,487.8 865.9,487.8 865.9,479.2 866.0,479.2 866.0,487.8 866.0,479.2 866.0,487.8 882.0,487.8 882.0,479.2 882.8,479.2 882.8,487.8 883.8,487.8 883.8,479.2 885.6,479.2 885.6,487.8 886.6,487.8 886.6,479.2 887.9,479.2 887.9,487.8 888.9,487.8 888.9,479.2 889.9,479.2 889.9,487.8 891.7,487.8 891.7,479.2 892.7,479.2 892.7,487.8 894.0,487.8 894.0,479.2 895.3,479.2 895.3,487.8 896.1,487.8 896.1,479.2 898.5,479.2 898.5,487.8 900.3,487.8 900.3,479.2 902.7,479.2 902.7,487.8 903.7,487.8 903.7,479.2 904.7,479.2 904.7,487.8 905.0,487.8 905.0,479.2 905.0,479.2 905.0,487.8 914.0,487.8 914.0,479.2 923.5,479.2" fill="none" stroke="#00f000" stroke-width="1.05" stroke-linejoin="miter"/>
<rect x="1075.5" y="58.5" width="119.0" height="737.5" fill="none" stroke="#ffffff" stroke-width="1"/>
<rect x="1074.5" y="57.5" width="119.0" height="737.5" fill="none" stroke="#d9d9d9" stroke-width="1"/>
<rect x="1078.00" y="50.00" width="62.00" height="14.00" fill="#f0f0f0" />
<text x="1079.80" y="61.00" textLength="58.40" lengthAdjust="spacingAndGlyphs" fill="#2020b8" style='font-family:"Liberation Sans", sans-serif;font-size:10.3px;'  stroke="#2020b8" stroke-width="0.3">Transponder [DT]</text>
<text x="1080.00" y="91.20" textLength="37.60" lengthAdjust="spacingAndGlyphs" fill="#111" style='font-family:"Liberation Sans", sans-serif;font-size:10.5px;font-weight:bold;'  stroke="#111" stroke-width="0.18">Frequency:</text>
<text x="1132.20" y="90.30" textLength="50.50" lengthAdjust="spacingAndGlyphs" fill="#222" style='font-family:"Liberation Sans", sans-serif;font-size:10.4px;'  stroke="#222" stroke-width="0.2">10714,151 MHz</text>
<text x="1080.00" y="129.14" textLength="43.00" lengthAdjust="spacingAndGlyphs" fill="#111" style='font-family:"Liberation Sans", sans-serif;font-size:10.5px;font-weight:bold;'  stroke="#111" stroke-width="0.18">Polarization:</text>
<text x="1132.20" y="128.24" textLength="35.30" lengthAdjust="spacingAndGlyphs" fill="#222" style='font-family:"Liberation Sans", sans-serif;font-size:10.4px;'  stroke="#222" stroke-width="0.2">Horizontal</text>
<text x="1080.00" y="167.08" textLength="45.00" lengthAdjust="spacingAndGlyphs" fill="#111" style='font-family:"Liberation Sans", sans-serif;font-size:10.5px;font-weight:bold;'  stroke="#111" stroke-width="0.18">Symbol Rate:</text>
<text x="1132.20" y="166.18" textLength="49.20" lengthAdjust="spacingAndGlyphs" fill="#222" style='font-family:"Liberation Sans", sans-serif;font-size:10.4px;'  stroke="#222" stroke-width="0.2">21998,391 KS/s</text>
<text x="1080.00" y="205.02" textLength="32.70" lengthAdjust="spacingAndGlyphs" fill="#111" style='font-family:"Liberation Sans", sans-serif;font-size:10.5px;font-weight:bold;'  stroke="#111" stroke-width="0.18">Standard:</text>
<text x="1132.20" y="204.12" textLength="20.30" lengthAdjust="spacingAndGlyphs" fill="#222" style='font-family:"Liberation Sans", sans-serif;font-size:10.4px;'  stroke="#222" stroke-width="0.2">DVB-S</text>
<text x="1080.00" y="242.96" textLength="43.00" lengthAdjust="spacingAndGlyphs" fill="#111" style='font-family:"Liberation Sans", sans-serif;font-size:10.5px;font-weight:bold;'  stroke="#111" stroke-width="0.18">Modulation:</text>
<text x="1132.20" y="242.06" textLength="17.10" lengthAdjust="spacingAndGlyphs" fill="#222" style='font-family:"Liberation Sans", sans-serif;font-size:10.4px;'  stroke="#222" stroke-width="0.2">QPSK</text>
<text x="1080.00" y="280.90" textLength="14.20" lengthAdjust="spacingAndGlyphs" fill="#111" style='font-family:"Liberation Sans", sans-serif;font-size:10.5px;font-weight:bold;'  stroke="#111" stroke-width="0.18">FEC:</text>
<text x="1132.20" y="280.00" textLength="10.70" lengthAdjust="spacingAndGlyphs" fill="#222" style='font-family:"Liberation Sans", sans-serif;font-size:10.4px;'  stroke="#222" stroke-width="0.2">5/6</text>
<text x="1080.00" y="318.84" textLength="25.50" lengthAdjust="spacingAndGlyphs" fill="#111" style='font-family:"Liberation Sans", sans-serif;font-size:10.5px;font-weight:bold;'  stroke="#111" stroke-width="0.18">RollOff:</text>
<text x="1132.20" y="317.94" textLength="14.30" lengthAdjust="spacingAndGlyphs" fill="#222" style='font-family:"Liberation Sans", sans-serif;font-size:10.4px;'  stroke="#222" stroke-width="0.2">0.35</text>
<text x="1080.00" y="356.78" textLength="18.50" lengthAdjust="spacingAndGlyphs" fill="#111" style='font-family:"Liberation Sans", sans-serif;font-size:10.5px;font-weight:bold;'  stroke="#111" stroke-width="0.18">Pilot:</text>
<text x="1132.20" y="355.88" textLength="13.80" lengthAdjust="spacingAndGlyphs" fill="#808080" style='font-family:"Liberation Sans", sans-serif;font-size:10.4px;'  stroke="#808080" stroke-width="0.2">OFF</text>
<text x="1080.00" y="394.72" textLength="33.50" lengthAdjust="spacingAndGlyphs" fill="#111" style='font-family:"Liberation Sans", sans-serif;font-size:10.5px;font-weight:bold;'  stroke="#111" stroke-width="0.18">Spectrum:</text>
<text x="1132.20" y="393.82" textLength="27.30" lengthAdjust="spacingAndGlyphs" fill="#222" style='font-family:"Liberation Sans", sans-serif;font-size:10.4px;'  stroke="#222" stroke-width="0.2">Inverted</text>
<text x="1080.00" y="432.66" textLength="41.50" lengthAdjust="spacingAndGlyphs" fill="#111" style='font-family:"Liberation Sans", sans-serif;font-size:10.5px;font-weight:bold;'  stroke="#111" stroke-width="0.18">Frame Type:</text>
<text x="1132.20" y="431.76" textLength="39.80" lengthAdjust="spacingAndGlyphs" fill="#909090" style='font-family:"Liberation Sans", sans-serif;font-size:10.4px;'  stroke="#909090" stroke-width="0.2">Long Frame</text>
<text x="1080.00" y="470.60" textLength="41.50" lengthAdjust="spacingAndGlyphs" fill="#111" style='font-family:"Liberation Sans", sans-serif;font-size:10.5px;font-weight:bold;'  stroke="#111" stroke-width="0.18">Code Mode:</text>
<text x="1132.20" y="469.70" textLength="15.80" lengthAdjust="spacingAndGlyphs" fill="#909090" style='font-family:"Liberation Sans", sans-serif;font-size:10.4px;'  stroke="#909090" stroke-width="0.2">CCM</text>
<text x="1080.00" y="508.54" textLength="43.00" lengthAdjust="spacingAndGlyphs" fill="#111" style='font-family:"Liberation Sans", sans-serif;font-size:10.5px;font-weight:bold;'  stroke="#111" stroke-width="0.18">Stream type:</text>
<text x="1132.20" y="507.64" textLength="31.80" lengthAdjust="spacingAndGlyphs" fill="#909090" style='font-family:"Liberation Sans", sans-serif;font-size:10.4px;'  stroke="#909090" stroke-width="0.2">Transport</text>
<text x="1080.00" y="546.48" textLength="18.00" lengthAdjust="spacingAndGlyphs" fill="#111" style='font-family:"Liberation Sans", sans-serif;font-size:10.5px;font-weight:bold;'  stroke="#111" stroke-width="0.18">ISSYI</text>
<text x="1132.20" y="545.58" textLength="13.80" lengthAdjust="spacingAndGlyphs" fill="#808080" style='font-family:"Liberation Sans", sans-serif;font-size:10.4px;'  stroke="#808080" stroke-width="0.2">OFF</text>
<text x="1080.00" y="584.42" textLength="17.50" lengthAdjust="spacingAndGlyphs" fill="#111" style='font-family:"Liberation Sans", sans-serif;font-size:10.5px;font-weight:bold;'  stroke="#111" stroke-width="0.18">NPD:</text>
<text x="1132.20" y="583.52" textLength="13.80" lengthAdjust="spacingAndGlyphs" fill="#808080" style='font-family:"Liberation Sans", sans-serif;font-size:10.4px;'  stroke="#808080" stroke-width="0.2">OFF</text>
<text x="1080.00" y="622.36" textLength="31.00" lengthAdjust="spacingAndGlyphs" fill="#111" style='font-family:"Liberation Sans", sans-serif;font-size:10.5px;font-weight:bold;'  stroke="#111" stroke-width="0.18">RF Level:</text>
<text x="1132.20" y="621.46" textLength="27.30" lengthAdjust="spacingAndGlyphs" fill="#222" style='font-family:"Liberation Sans", sans-serif;font-size:10.4px;'  stroke="#222" stroke-width="0.2">-44 dBm</text>
<text x="1080.00" y="660.30" textLength="27.00" lengthAdjust="spacingAndGlyphs" fill="#111" style='font-family:"Liberation Sans", sans-serif;font-size:10.5px;font-weight:bold;'  stroke="#111" stroke-width="0.18">BitRate:</text>
<text x="1132.20" y="659.40" textLength="45.30" lengthAdjust="spacingAndGlyphs" fill="#222" style='font-family:"Liberation Sans", sans-serif;font-size:10.4px;'  stroke="#222" stroke-width="0.2">36,664 Mbit/s</text>
<text x="1080.00" y="698.24" textLength="46.50" lengthAdjust="spacingAndGlyphs" fill="#111" style='font-family:"Liberation Sans", sans-serif;font-size:10.5px;font-weight:bold;'  stroke="#111" stroke-width="0.18">CarrierWidth:</text>
<text x="1132.20" y="697.34" textLength="39.30" lengthAdjust="spacingAndGlyphs" fill="#222" style='font-family:"Liberation Sans", sans-serif;font-size:10.4px;'  stroke="#222" stroke-width="0.2">29,697 MHz</text>
<text x="1080.00" y="756.40" textLength="26.50" lengthAdjust="spacingAndGlyphs" fill="#111" style='font-family:"Liberation Sans", sans-serif;font-size:10.5px;font-weight:bold;'  stroke="#111" stroke-width="0.18">MIS (0):</text>
<rect x="1132.00" y="741.00" width="50.00" height="20.00" fill="#d6d6d6" stroke="#c2c2c2" stroke-width="1"/>
<text x="1135.00" y="755.30" textLength="21.50" lengthAdjust="spacingAndGlyphs" fill="#8a8a8a" style='font-family:"Liberation Sans", sans-serif;font-size:10.4px;'  stroke="#8a8a8a" stroke-width="0.3">Single</text>
<path d="M1171 748.5 l3.2 3.2 l3.2 -3.2" fill="none" stroke="#a0a0a0" stroke-width="1"/>
<rect x="1075.50" y="802.50" width="118.00" height="25.00" fill="#e4e4e4" stroke="#c6c6c6" stroke-width="1"/>
<line x1="1076.00" y1="827.50" x2="1193.50" y2="827.50" stroke="#b0b0b0" stroke-width="1" />
<g><rect x="1129" y="808.5" width="10" height="14" rx="1" fill="#fdfdfd" stroke="#8aa0c0" stroke-width="0.8"/><rect x="1130" y="812" width="8" height="3.2" fill="#4a90e0"/><line x1="1130" y1="818.5" x2="1138" y2="818.5" stroke="#9ab" stroke-width="0.8"/><line x1="1130" y1="810.5" x2="1138" y2="810.5" stroke="#9ab" stroke-width="0.8"/></g>
<rect x="5.50" y="839.50" width="39.50" height="18.80" fill="url(#ggreen)" stroke="#b8c8b8" stroke-width="1"/>
<text x="13.27" y="853.80" textLength="23.96" lengthAdjust="spacingAndGlyphs" fill="#111" style='font-family:"Liberation Sans", sans-serif;font-size:10.3px;'  stroke="#111" stroke-width="0.2">Present</text>
<rect x="5.50" y="863.50" width="39.50" height="18.80" fill="url(#ggreen)" stroke="#b8c8b8" stroke-width="1"/>
<text x="17.91" y="877.80" textLength="14.69" lengthAdjust="spacingAndGlyphs" fill="#111" style='font-family:"Liberation Sans", sans-serif;font-size:10.3px;'  stroke="#111" stroke-width="0.2">Lock</text>
<rect x="48.50" y="839.50" width="549.00" height="18.80" fill="url(#pgrey)" stroke="#b4b4b4" stroke-width="1"/>
<rect x="49.50" y="840.50" width="90.50" height="16.80" fill="url(#pred)" />
<rect x="140.00" y="840.50" width="32.00" height="16.80" fill="url(#pyel)" />
<text x="303.44" y="853.80" textLength="39.12" lengthAdjust="spacingAndGlyphs" fill="#111" style='font-family:"Liberation Sans", sans-serif;font-size:10.2px;'  stroke="#111" stroke-width="0.2">SNR: 6,7 dB</text>
<rect x="48.50" y="863.50" width="549.00" height="18.80" fill="url(#pgrey)" stroke="#b4b4b4" stroke-width="1"/>
<rect x="49.50" y="864.50" width="53.80" height="16.80" fill="url(#pred)" />
<rect x="103.30" y="864.50" width="219.40" height="16.80" fill="url(#pyel)" />
<rect x="322.70" y="864.50" width="55.00" height="16.80" fill="url(#pgrn)" />
<text x="303.05" y="877.80" textLength="39.90" lengthAdjust="spacingAndGlyphs" fill="#111" style='font-family:"Liberation Sans", sans-serif;font-size:10.2px;'  stroke="#111" stroke-width="0.2">Quality: 60%</text>
<rect x="600.50" y="839.50" width="548.00" height="18.80" fill="url(#pgrey)" stroke="#b4b4b4" stroke-width="1"/>
<rect x="601.50" y="840.50" width="117.00" height="16.80" fill="url(#pred)" />
<rect x="718.50" y="840.50" width="79.00" height="16.80" fill="url(#pyel)" />
<text x="854.94" y="853.80" textLength="39.12" lengthAdjust="spacingAndGlyphs" fill="#111" style='font-family:"Liberation Sans", sans-serif;font-size:10.2px;'  stroke="#111" stroke-width="0.2">BER: 5,5E-3</text>
<rect x="600.50" y="863.50" width="548.00" height="18.80" fill="url(#pgrey)" stroke="#b4b4b4" stroke-width="1"/>
<rect x="601.50" y="864.50" width="53.50" height="16.80" fill="url(#pred)" />
<rect x="655.00" y="864.50" width="126.50" height="16.80" fill="url(#pyel)" />
<text x="857.09" y="877.80" textLength="34.82" lengthAdjust="spacingAndGlyphs" fill="#111" style='font-family:"Liberation Sans", sans-serif;font-size:10.2px;'  stroke="#111" stroke-width="0.2">Level: 33%</text>
<rect x="1152.50" y="839.50" width="41.00" height="18.80" fill="url(#ggreen)" stroke="#b8c8b8" stroke-width="1"/>
<text x="1159.92" y="853.80" textLength="26.15" lengthAdjust="spacingAndGlyphs" fill="#111" style='font-family:"Liberation Sans", sans-serif;font-size:10.3px;'  stroke="#111" stroke-width="0.2">Input TS</text>
<rect x="1152.50" y="863.50" width="41.00" height="18.80" fill="url(#ggreen)" stroke="#b8c8b8" stroke-width="1"/>
<text x="1159.93" y="877.80" textLength="26.15" lengthAdjust="spacingAndGlyphs" fill="#111" style='font-family:"Liberation Sans", sans-serif;font-size:10.3px;'  stroke="#111" stroke-width="0.2">Sync TS</text>
<line x1="0.00" y1="892.50" x2="1200.00" y2="892.50" stroke="#d4d4d4" stroke-width="1" />
<text x="3.00" y="907.20" textLength="95.00" lengthAdjust="spacingAndGlyphs" fill="#111" style='font-family:"Liberation Sans", sans-serif;font-size:10.5px;'  stroke="#111" stroke-width="0.3">Locked -&gt; Uptime: 00:52:03</text>
<text x="596.50" y="907.20" textLength="197.00" lengthAdjust="spacingAndGlyphs" fill="#111" style='font-family:"Liberation Sans", sans-serif;font-size:10.5px;'  stroke="#111" stroke-width="0.3">Best signal has been seen at 2021-03-16 10.11 with 6,7 dB</text>
<rect x="1196.50" y="904.50" width="1.30" height="1.30" fill="#b8b8b8" />
<rect x="1196.50" y="907.00" width="1.30" height="1.30" fill="#b8b8b8" />
<rect x="1194.00" y="907.00" width="1.30" height="1.30" fill="#b8b8b8" />
<rect x="1196.50" y="909.50" width="1.30" height="1.30" fill="#b8b8b8" />
<rect x="1194.00" y="909.50" width="1.30" height="1.30" fill="#b8b8b8" />
<rect x="1191.50" y="909.50" width="1.30" height="1.30" fill="#b8b8b8" />
<g opacity="0.95"><rect x="1092" y="405" width="102" height="106" fill="#ffffff" opacity="0.30"/><path d="M1112.24 492.03 A46.9 46.9 0 0 1 1177.06 424.44" fill="none" stroke="#9c9cd2" stroke-width="1.7"/><path d="M1179.12 427.01 A46.4 46.4 0 0 1 1192.94 457.67" fill="none" stroke="#9c9cd2" stroke-width="3"/><path d="M1193.10 466.22 A46.9 46.9 0 0 1 1180.96 492.03 L1112.24 492.03" fill="none" stroke="#9c9cd2" stroke-width="1.6"/><path d="M1175.8 432.8 A40 40 0 0 1 1187 459.7" fill="none" stroke="#e89494" stroke-width="3.4"/><path d="M1171.2 439.4 A32 32 0 0 1 1178.4 457" fill="none" stroke="#e89494" stroke-width="3.2"/><path d="M1129.5 419.5 C1127 426 1134 450 1142 470 C1148 484 1155 490 1156.5 488 C1150 470 1140 440 1131.5 420 Z" fill="#f4f4fa" fill-opacity="0.6" stroke="#8c8cc0" stroke-width="1"/><path d="M1132 421 C1138 430 1142 438 1145 445" fill="none" stroke="#8c8cc0" stroke-width="0.8"/><path d="M1147 451.5 L1166.5 452.5 L1156 466" fill="none" stroke="#9c9cd0" stroke-width="1"/><path d="M1132.5 441 L1133 468 L1148 478" fill="none" stroke="#9c9cd0" stroke-width="1"/><circle cx="1125" cy="471" r="4.2" fill="#f2f2f8" stroke="#a4a4d4" stroke-width="1.2"/><path d="M1127 476 C1128 484 1122 489 1112 492 L1136 492 C1130 488 1128 482 1128.5 476 Z" fill="#a8a8d8"/></g>
<text x="1096.50" y="505.80" textLength="21.00" lengthAdjust="spacingAndGlyphs" fill="#dc949a" style='font-family:"Liberation Serif", serif;font-size:15.6px;font-weight:bold;'  stroke="#dc949a" stroke-width="0.18">DX</text>
<text x="1118.00" y="505.80" textLength="79.00" lengthAdjust="spacingAndGlyphs" fill="#9090cc" style='font-family:"Liberation Serif", serif;font-size:15.6px;font-weight:bold;'  stroke="#9090cc" stroke-width="0.18">SATCS.COM</text>
<rect x="353" y="54" width="722" height="63" fill="#000" opacity="0.18" filter="url(#shadow)"/>
<rect x="356.00" y="55.70" width="717.00" height="30.50" fill="#ffffff" />
<rect x="356.00" y="86.00" width="705.50" height="28.60" fill="#000000" />
<rect x="1061.50" y="86.00" width="11.50" height="28.60" fill="#f0f0f0" />
<path d="M1064.3 94.8 l2.9 -3 l2.9 3" fill="none" stroke="#505050" stroke-width="1.1"/><path d="M1064.3 105.3 l2.9 3 l2.9 -3" fill="none" stroke="#505050" stroke-width="1.1"/>
<line x1="356.00" y1="55.50" x2="1073.00" y2="55.50" stroke="#8a8a8a" stroke-width="0.8" />
<line x1="356.50" y1="55.70" x2="356.50" y2="114.60" stroke="#6a6a6a" stroke-width="0.7" />
<rect x="361.60" y="64.40" width="10.40" height="12.20" fill="#000" stroke="#9a9a9a" stroke-width="0.5"/>
<rect x="361.60" y="64.40" width="10.40" height="1.90" fill="#c4c4c4" />
<text x="362.60" y="73.80" textLength="5.80" lengthAdjust="spacingAndGlyphs" fill="#fff" style='font-family:"Liberation Sans", sans-serif;font-size:5.6px;font-weight:bold;'  stroke="#fff" stroke-width="0.18">C:\</text>
<line x1="368.60" y1="74.30" x2="371.00" y2="74.30" stroke="#e0e0e0" stroke-width="0.9" />
<text x="376.00" y="75.00" textLength="56.50" lengthAdjust="spacingAndGlyphs" fill="#979797" style='font-family:"Liberation Sans", sans-serif;font-size:10.4px;' >Príkazový riadok</text>
<text x="357.00" y="98.70" textLength="691.00" lengthAdjust="spacingAndGlyphs" fill="#c4c4c4" style='font-family:"Liberation Mono", monospace;font-size:11.4px;' >C:\Users\Roman Dávid&gt;Astra 2E-28,5°E_UK FOOTPRINT_Lučenec/Slovakia_PF 450 cm_10 714 H BSkyB_Signal monitoring_16.3.2021_dxsatcs.com</text>
<rect x="613" y="39" width="462" height="47" fill="#000" opacity="0.15" filter="url(#blur2)"/>
<rect x="614.30" y="39.20" width="114.70" height="21.00" fill="#ee1122" />
<rect x="614.30" y="60.00" width="114.70" height="24.20" fill="url(#gclk)" />
<line x1="615.30" y1="64.50" x2="728.00" y2="64.50" stroke="#dcdcdc" stroke-width="0.8" opacity="0.55"/>
<line x1="615.30" y1="67.50" x2="728.00" y2="67.50" stroke="#dcdcdc" stroke-width="0.8" opacity="0.55"/>
<line x1="615.30" y1="71.50" x2="728.00" y2="71.50" stroke="#dcdcdc" stroke-width="0.8" opacity="0.55"/>
<line x1="615.30" y1="74.50" x2="728.00" y2="74.50" stroke="#dcdcdc" stroke-width="0.8" opacity="0.55"/>
<line x1="615.30" y1="78.50" x2="728.00" y2="78.50" stroke="#dcdcdc" stroke-width="0.8" opacity="0.55"/>
<line x1="615.30" y1="81.50" x2="728.00" y2="81.50" stroke="#dcdcdc" stroke-width="0.8" opacity="0.55"/>
<rect x="614.30" y="39.2" width="114.7" height="45" fill="none" stroke="#111" stroke-width="1.1"/>
<line x1="614.30" y1="60.50" x2="729.00" y2="60.50" stroke="#111" stroke-width="1.1" />
<text x="646.20" y="55.00" textLength="51.50" lengthAdjust="spacingAndGlyphs" fill="#111" style='font-family:"Liberation Sans", sans-serif;font-size:17px;font-weight:bold;font-style:italic;'  stroke="#111" stroke-width="0.1">Bratislava</text>
<text x="619.10" y="79.00" textLength="47.30" lengthAdjust="spacingAndGlyphs" fill="#111" style='font-family:"Liberation Sans", sans-serif;font-size:12.5px;'  stroke="#111" stroke-width="0.45">Tue, Mar 16</text>
<text x="676.64" y="69.00" textLength="6.92" lengthAdjust="spacingAndGlyphs" fill="#111" style='font-family:"Liberation Sans", sans-serif;font-size:9.2px;'  stroke="#111" stroke-width="0.35">+1</text>
<text x="695.80" y="79.00" textLength="20.30" lengthAdjust="spacingAndGlyphs" fill="#111" style='font-family:"Liberation Sans", sans-serif;font-size:12.5px;'  stroke="#111" stroke-width="0.45">10:11</text>
<rect x="729.00" y="39.20" width="114.70" height="21.00" fill="#2277dd" />
<rect x="729.00" y="60.00" width="114.70" height="24.20" fill="url(#gclk)" />
<line x1="730.00" y1="64.50" x2="842.70" y2="64.50" stroke="#dcdcdc" stroke-width="0.8" opacity="0.55"/>
<line x1="730.00" y1="67.50" x2="842.70" y2="67.50" stroke="#dcdcdc" stroke-width="0.8" opacity="0.55"/>
<line x1="730.00" y1="71.50" x2="842.70" y2="71.50" stroke="#dcdcdc" stroke-width="0.8" opacity="0.55"/>
<line x1="730.00" y1="74.50" x2="842.70" y2="74.50" stroke="#dcdcdc" stroke-width="0.8" opacity="0.55"/>
<line x1="730.00" y1="78.50" x2="842.70" y2="78.50" stroke="#dcdcdc" stroke-width="0.8" opacity="0.55"/>
<line x1="730.00" y1="81.50" x2="842.70" y2="81.50" stroke="#dcdcdc" stroke-width="0.8" opacity="0.55"/>
<rect x="729.00" y="39.2" width="114.7" height="45" fill="none" stroke="#111" stroke-width="1.1"/>
<line x1="729.00" y1="60.50" x2="843.70" y2="60.50" stroke="#111" stroke-width="1.1" />
<text x="753.65" y="55.00" textLength="66.00" lengthAdjust="spacingAndGlyphs" fill="#111" style='font-family:"Liberation Sans", sans-serif;font-size:17px;font-weight:bold;font-style:italic;'  stroke="#111" stroke-width="0.1">London, Eng</text>
<text x="733.80" y="79.00" textLength="47.30" lengthAdjust="spacingAndGlyphs" fill="#111" style='font-family:"Liberation Sans", sans-serif;font-size:12.5px;'  stroke="#111" stroke-width="0.45">Tue, Mar 16</text>
<text x="788.05" y="69.00" textLength="13.49" lengthAdjust="spacingAndGlyphs" fill="#111" style='font-family:"Liberation Sans", sans-serif;font-size:9.2px;'  stroke="#111" stroke-width="0.35">GMT</text>
<text x="810.50" y="79.00" textLength="20.30" lengthAdjust="spacingAndGlyphs" fill="#111" style='font-family:"Liberation Sans", sans-serif;font-size:12.5px;'  stroke="#111" stroke-width="0.45">09:11</text>
<rect x="843.70" y="39.20" width="114.70" height="21.00" fill="#ff7f0e" />
<rect x="843.70" y="60.00" width="114.70" height="24.20" fill="url(#gclk)" />
<line x1="844.70" y1="64.50" x2="957.40" y2="64.50" stroke="#dcdcdc" stroke-width="0.8" opacity="0.55"/>
<line x1="844.70" y1="67.50" x2="957.40" y2="67.50" stroke="#dcdcdc" stroke-width="0.8" opacity="0.55"/>
<line x1="844.70" y1="71.50" x2="957.40" y2="71.50" stroke="#dcdcdc" stroke-width="0.8" opacity="0.55"/>
<line x1="844.70" y1="74.50" x2="957.40" y2="74.50" stroke="#dcdcdc" stroke-width="0.8" opacity="0.55"/>
<line x1="844.70" y1="78.50" x2="957.40" y2="78.50" stroke="#dcdcdc" stroke-width="0.8" opacity="0.55"/>
<line x1="844.70" y1="81.50" x2="957.40" y2="81.50" stroke="#dcdcdc" stroke-width="0.8" opacity="0.55"/>
<rect x="843.70" y="39.2" width="114.7" height="45" fill="none" stroke="#111" stroke-width="1.1"/>
<line x1="843.70" y1="60.50" x2="958.40" y2="60.50" stroke="#111" stroke-width="1.1" />
<text x="885.60" y="55.00" textLength="31.50" lengthAdjust="spacingAndGlyphs" fill="#111" style='font-family:"Liberation Sans", sans-serif;font-size:17px;font-weight:bold;font-style:italic;'  stroke="#111" stroke-width="0.1">Dubai</text>
<text x="848.50" y="79.00" textLength="47.30" lengthAdjust="spacingAndGlyphs" fill="#111" style='font-family:"Liberation Sans", sans-serif;font-size:12.5px;'  stroke="#111" stroke-width="0.45">Tue, Mar 16</text>
<text x="906.04" y="69.00" textLength="6.92" lengthAdjust="spacingAndGlyphs" fill="#111" style='font-family:"Liberation Sans", sans-serif;font-size:9.2px;'  stroke="#111" stroke-width="0.35">+4</text>
<text x="925.20" y="79.00" textLength="20.30" lengthAdjust="spacingAndGlyphs" fill="#111" style='font-family:"Liberation Sans", sans-serif;font-size:12.5px;'  stroke="#111" stroke-width="0.45">13:11</text>
<rect x="958.40" y="39.20" width="114.70" height="21.00" fill="#b3d320" />
<rect x="958.40" y="60.00" width="114.70" height="24.20" fill="url(#gclk)" />
<line x1="959.40" y1="64.50" x2="1072.10" y2="64.50" stroke="#dcdcdc" stroke-width="0.8" opacity="0.55"/>
<line x1="959.40" y1="67.50" x2="1072.10" y2="67.50" stroke="#dcdcdc" stroke-width="0.8" opacity="0.55"/>
<line x1="959.40" y1="71.50" x2="1072.10" y2="71.50" stroke="#dcdcdc" stroke-width="0.8" opacity="0.55"/>
<line x1="959.40" y1="74.50" x2="1072.10" y2="74.50" stroke="#dcdcdc" stroke-width="0.8" opacity="0.55"/>
<line x1="959.40" y1="78.50" x2="1072.10" y2="78.50" stroke="#dcdcdc" stroke-width="0.8" opacity="0.55"/>
<line x1="959.40" y1="81.50" x2="1072.10" y2="81.50" stroke="#dcdcdc" stroke-width="0.8" opacity="0.55"/>
<rect x="958.40" y="39.2" width="114.7" height="45" fill="none" stroke="#111" stroke-width="1.1"/>
<line x1="958.40" y1="60.50" x2="1073.10" y2="60.50" stroke="#111" stroke-width="1.1" />
<text x="1002.30" y="55.00" textLength="27.50" lengthAdjust="spacingAndGlyphs" fill="#111" style='font-family:"Liberation Sans", sans-serif;font-size:17px;font-weight:bold;font-style:italic;'  stroke="#111" stroke-width="0.1">Cairo</text>
<text x="963.20" y="79.00" textLength="47.30" lengthAdjust="spacingAndGlyphs" fill="#111" style='font-family:"Liberation Sans", sans-serif;font-size:12.5px;'  stroke="#111" stroke-width="0.45">Tue, Mar 16</text>
<text x="1020.74" y="69.00" textLength="6.92" lengthAdjust="spacingAndGlyphs" fill="#111" style='font-family:"Liberation Sans", sans-serif;font-size:9.2px;'  stroke="#111" stroke-width="0.35">+2</text>
<text x="1039.90" y="79.00" textLength="20.30" lengthAdjust="spacingAndGlyphs" fill="#111" style='font-family:"Liberation Sans", sans-serif;font-size:12.5px;'  stroke="#111" stroke-width="0.45">11:11</text>
<rect x="89.6" y="256.9" width="452.19999999999993" height="454.30000000000007" fill="#000" opacity="0.24" filter="url(#blur4)"/>
<rect x="90.60" y="255.90" width="449.20" height="451.30" fill="#f0f0f0" />
<rect x="90.60" y="255.90" width="449.20" height="51.10" fill="#ffffff" />
<rect x="90.6" y="255.9" width="449.19999999999993" height="451.30000000000007" fill="none" stroke="#a4a49c" stroke-width="0.8"/>
<g><path d="M101.5 262.3 L104.2 271.5 L98.8 271.5 Z" fill="#f08a1c"/><path d="M100.3 266.2 h2.5 l0.6 2 h-3.7z" fill="#fff"/><path d="M98 271.5 h7 l1.6 5.5 h-10.2z" fill="#e87810"/><path d="M99 272.3 h5 l0.4 1.6 h-5.8z" fill="#fff" opacity="0.85"/></g>
<text x="110.50" y="274.50" textLength="109.50" lengthAdjust="spacingAndGlyphs" fill="#8a8a8a" style='font-family:"Liberation Sans", sans-serif;font-size:10.3px;' >Baby Daddy - VLC media player</text>
<line x1="464.50" y1="270.50" x2="471.50" y2="270.50" stroke="#777" stroke-width="0.9" />
<rect x="490.5" y="265.8" width="7" height="8.4" fill="none" stroke="#777" stroke-width="0.9"/>
<path d="M520.7 265.8 L527.7 274.3 M527.7 265.8 L520.7 274.3" stroke="#777" stroke-width="0.9" fill="none"/>
<text x="96.50" y="300.80" textLength="29.70" lengthAdjust="spacingAndGlyphs" fill="#9a9a9a" style='font-family:"Liberation Sans", sans-serif;font-size:10.3px;' >Médium</text>
<text x="136.80" y="300.80" textLength="40.70" lengthAdjust="spacingAndGlyphs" fill="#9a9a9a" style='font-family:"Liberation Sans", sans-serif;font-size:10.3px;' >Prehrávanie</text>
<text x="188.10" y="300.80" textLength="17.20" lengthAdjust="spacingAndGlyphs" fill="#9a9a9a" style='font-family:"Liberation Sans", sans-serif;font-size:10.3px;' >Zvuk</text>
<text x="215.50" y="300.80" textLength="20.00" lengthAdjust="spacingAndGlyphs" fill="#9a9a9a" style='font-family:"Liberation Sans", sans-serif;font-size:10.3px;' >Video</text>
<text x="246.50" y="300.80" textLength="23.10" lengthAdjust="spacingAndGlyphs" fill="#9a9a9a" style='font-family:"Liberation Sans", sans-serif;font-size:10.3px;' >Titulky</text>
<text x="279.80" y="300.80" textLength="28.90" lengthAdjust="spacingAndGlyphs" fill="#9a9a9a" style='font-family:"Liberation Sans", sans-serif;font-size:10.3px;' >Nástroje</text>
<text x="319.30" y="300.80" textLength="29.70" lengthAdjust="spacingAndGlyphs" fill="#9a9a9a" style='font-family:"Liberation Sans", sans-serif;font-size:10.3px;' >Zobraziť</text>
<text x="359.30" y="300.80" textLength="36.00" lengthAdjust="spacingAndGlyphs" fill="#9a9a9a" style='font-family:"Liberation Sans", sans-serif;font-size:10.3px;' >Pomocník</text>
<rect x="91.00" y="307.00" width="448.80" height="323.00" fill="#000" />
<clipPath id="vclip"><rect x="120" y="307" width="392" height="323"/></clipPath>
<filter id="gnoise" x="0" y="0" width="100%" height="100%"><feTurbulence type="fractalNoise" baseFrequency="0.09 0.13" numOctaves="3" seed="11"/><feColorMatrix type="matrix" values="0 0 0 0 0.30  0 0 0 0 0.20  0 0 0 0 0.10  1.6 1.2 0 0 -1.05"/></filter>
<filter id="gnoise2" x="0" y="0" width="100%" height="100%"><feTurbulence type="fractalNoise" baseFrequency="0.11 0.16" numOctaves="2" seed="5"/><feColorMatrix type="matrix" values="0 0 0 0 0.86  0 0 0 0 0.74  0 0 0 0 0.55  0 1.6 1.4 0 -1.25"/></filter>
<linearGradient id="gsky" x1="0" y1="0" x2="0.25" y2="1"><stop offset="0" stop-color="#e1dcd8"/><stop offset="0.4" stop-color="#ece9e6"/><stop offset="1" stop-color="#eae5df"/></linearGradient>
<linearGradient id="ggnd" x1="0" y1="0" x2="0" y2="1"><stop offset="0" stop-color="#a88c6c"/><stop offset="0.25" stop-color="#b09068"/><stop offset="1" stop-color="#ac8b62"/></linearGradient>
<linearGradient id="gshawl" x1="0" y1="0" x2="1" y2="0"><stop offset="0" stop-color="#b3a78d"/><stop offset="0.25" stop-color="#c6bba2"/><stop offset="0.65" stop-color="#beb298"/><stop offset="1" stop-color="#a4987e"/></linearGradient>
<g clip-path="url(#vclip)">
<rect x="118" y="307" width="396" height="125" fill="url(#gsky)"/>
<polygon points="100,388 150,380 175,375 198,380 218,392 250,404 290,409 100,414" fill="#dccfc2" filter="url(#blur2)"/>
<polygon points="100,397 200,405 260,408.5 330,411 400,410 450,405 530,395 530,460 100,460" fill="#d7c4a9" filter="url(#blur1)"/>
<polygon points="100,420 530,412 530,455 100,455" fill="#c9b08f" opacity="0.55" filter="url(#blur2)"/>
<polygon points="100,447 180,443 260,440 330,439 400,439 440,433 470,436 530,438 530,650 100,650" fill="url(#ggnd)" filter="url(#blur1)"/>
<linearGradient id="gmaskg" x1="0" y1="0" x2="0" y2="1"><stop offset="0" stop-color="#000"/><stop offset="0.12" stop-color="#777"/><stop offset="0.5" stop-color="#fff"/></linearGradient><mask id="gmask"><rect x="126" y="436" width="379" height="196" fill="url(#gmaskg)"/></mask>
<g mask="url(#gmask)"><rect x="126" y="436" width="379" height="196" filter="url(#gnoise)" opacity="0.55"/>
<rect x="126" y="436" width="379" height="196" filter="url(#gnoise2)" opacity="0.30"/></g>
<polygon points="100,447 180,443 260,440 330,439 400,438 440,432 470,435 530,438 530,462 400,466 260,470 100,474" fill="#93795a" opacity="0.55" filter="url(#blur2)"/>
<ellipse cx="141" cy="397" rx="4.5" ry="2.5" fill="#a79b8d" filter="url(#blur1)"/>
<ellipse cx="152" cy="395" rx="2.5" ry="3.5" fill="#a79b8d" filter="url(#blur1)"/>
<ellipse cx="168" cy="398" rx="2.0" ry="3.0" fill="#a79b8d" filter="url(#blur1)"/>
<ellipse cx="236.5" cy="400" rx="1.5" ry="4.5" fill="#a79b8d" filter="url(#blur1)"/>
<ellipse cx="190" cy="401" rx="6.0" ry="1.5" fill="#a79b8d" filter="url(#blur1)"/>
<ellipse cx="501" cy="391" rx="1.5" ry="3.0" fill="#a79b8d" filter="url(#blur1)"/>
<ellipse cx="476" cy="397" rx="2.5" ry="1.5" fill="#a79b8d" filter="url(#blur1)"/>
<ellipse cx="492" cy="393" rx="1.5" ry="3.0" fill="#a79b8d" filter="url(#blur1)"/>
<ellipse cx="484" cy="395" rx="1.0" ry="2.5" fill="#a79b8d" filter="url(#blur1)"/>
<polygon points="252.8,354.7 262.1,339.1 273.6,345.3 287.1,329.8 296.4,337.0 304.7,330.8 315.1,341.2 325.5,351.6 335.5,347.4 332.8,358.9 338.0,376.5 333.8,381.7 325.5,372.4 315.1,393.2 306.8,409.8 298.5,403.6 290.2,409.8 285.0,427.5 271.5,431.6 260.0,429.5 255.3,418.1 259.0,401.5 251.7,393.2 258.0,372.4 260.7,366.1" fill="#6a5848" stroke="#6a5848" stroke-width="1.5" stroke-linejoin="round" filter="url(#blur1)"/>
<polygon points="277.7,347.4 296.4,341.2 315.1,351.6 325.5,364.1 313.1,378.6 296.4,372.4 284.0,364.1" fill="#7e6a58" filter="url(#blur2)" opacity="0.9"/>
<polygon points="263.2,372.4 277.7,368.2 279.8,397.3 271.5,422.3 261.1,422.3 260.0,401.5" fill="#4e3e32" filter="url(#blur2)" opacity="0.8"/>
<polygon points="325.5,372.4 334.3,381.7 334.9,397.3 331.4,414.0 332.8,426.4 334.3,436.8 331.4,445.1 325.5,453.5 323.5,461.8 318.3,471.1 313.1,474.2 304.7,463.8 293.3,436.8 285.0,427.5 288.1,407.7 304.7,401.5 315.1,393.2" fill="#9c6a4b" filter="url(#blur1)"/>
<polygon points="317.2,389.0 332.8,384.8 333.8,401.5 325.5,418.1 315.1,409.8" fill="#ad7b59" filter="url(#blur2)" opacity="0.9"/>
<polygon points="293.3,436.8 308.9,434.7 323.5,455.5 318.3,471.1 313.1,474.2 304.7,463.8" fill="#7f5138" filter="url(#blur2)" opacity="0.85"/>
<polygon points="285.0,403.6 293.3,399.4 296.8,414.0 293.3,428.5 286.0,426.4" fill="#a26c4c" filter="url(#blur1)"/>
<polygon points="321.4,418.1 330.7,415.0 330.1,420.2 323.5,423.3" fill="#5e3c2a" filter="url(#blur1)" opacity="0.8"/>
<polygon points="279.8,428.5 293.3,434.7 306.8,463.8 296.4,459.7 277.7,436.8" fill="#8a5a40" filter="url(#blur1)"/>
<polygon points="292.7,552.0 304.2,536.7 315.7,534.8 327.2,527.1 338.7,525.2 346.3,540.5 351.1,559.7 348.3,567.3 323.3,578.8 315.7,594.2 304.2,605.7 294.6,632.5 256.3,632.5 277.3,594.2 285.0,567.3" fill="#d8968c" filter="url(#blur1)"/>
<polygon points="304.2,540.5 319.5,536.7 315.7,559.7 296.5,575.0 292.7,563.5" fill="#e4aaa2" filter="url(#blur2)" opacity="0.8"/>
<polygon points="327.2,517.5 334.8,506.0 343.5,496.4 350.2,504.1 352.5,517.5 347.3,533.8 338.7,525.6 329.1,527.5" fill="#a3714f" filter="url(#blur1)"/>
<polygon points="321.0,489.1 342.5,479.2 346.7,486.8 345.4,498.3 338.7,507.9 329.5,512.1 323.3,500.3" fill="#9a948a" filter="url(#blur1)"/>
<polygon points="321.4,489.1 342.1,479.7 344.4,484.0 323.3,494.1" fill="#c8c2b8" filter="url(#blur1)"/>
<polygon points="186.2,500.0 189.4,468.0 194.6,455.5 206.0,445.6 242.4,435.2 267.3,431.8 279.8,434.7 292.3,447.2 304.7,465.9 315.1,482.6 323.5,500.0" fill="#bfb399" filter="url(#blur1)"/>
<polygon points="188.2,458.1 304.2,458.1 315.7,479.2 321.4,498.3 326.2,517.5 325.3,529.0 315.7,536.7 304.2,544.3 292.7,552.0 285.0,567.3 277.3,594.2 269.7,613.3 260.1,632.5 172.9,632.5 179.6,555.8 181.5,517.5" fill="url(#gshawl)" filter="url(#blur1)"/>
<polygon points="304.2,603.8 317.6,592.3 329.1,582.7 342.5,594.2 345.4,613.3 348.3,632.5 290.8,632.5 295.6,613.3" fill="#ab9f85" filter="url(#blur1)"/>
<polygon points="277.3,471.5 304.2,463.8 317.6,498.3 323.3,523.3 311.8,532.8 300.3,517.5 288.8,490.7" fill="#c9bea5" filter="url(#blur2)" opacity="0.85"/>
<polygon points="233.3,540.5 269.7,532.8 292.7,552.0 285.0,567.3 277.3,594.2 265.8,617.2 250.5,632.5 233.3,632.5 242.8,582.7" fill="#988c73" filter="url(#blur4)" opacity="0.55"/>
<polygon points="192.5,459.7 207.0,447.2 242.4,437.2 267.3,433.9 263.2,443.1 232.0,449.3 204.9,461.8" fill="#cfc4ab" filter="url(#blur2)" opacity="0.8"/>
</g>
<rect x="91.00" y="307.00" width="35.40" height="323.00" fill="#000" />
<rect x="504.40" y="307.00" width="35.40" height="323.00" fill="#000" />
<g filter="url(#tsh)">
<text x="142.70" y="585.50" textLength="148.80" lengthAdjust="spacingAndGlyphs" fill="#fbfbfb" style='font-family:"Liberation Sans", sans-serif;font-size:20.5px;'  stroke="#fbfbfb" stroke-width="0.2">Text WATERAID to 70001</text>
<text x="305.20" y="585.50" textLength="89.30" lengthAdjust="spacingAndGlyphs" fill="#fbfbfb" style='font-family:"Liberation Sans", sans-serif;font-size:20.5px;'  stroke="#fbfbfb" stroke-width="0.2">0800 088 7787</text>
<text x="408.20" y="585.50" textLength="80.30" lengthAdjust="spacingAndGlyphs" fill="#fbfbfb" style='font-family:"Liberation Sans", sans-serif;font-size:20.5px;'  stroke="#fbfbfb" stroke-width="0.2">WaterAid.org</text>
</g>
<text x="259.40" y="612.30" textLength="113.60" lengthAdjust="spacingAndGlyphs" fill="#f0f0f0" style='font-family:"Liberation Sans", sans-serif;font-size:16.4px;' paint-order="stroke" stroke="#3a3030" stroke-width="1.5" stroke-opacity="0.7">Texts cost standard network rate.</text>
<text x="95.30" y="643.00" textLength="19.20" lengthAdjust="spacingAndGlyphs" fill="#111" style='font-family:"Liberation Sans", sans-serif;font-size:8.8px;'  stroke="#111" stroke-width="0.15">51:44</text>
<text x="516.00" y="643.00" textLength="19.00" lengthAdjust="spacingAndGlyphs" fill="#111" style='font-family:"Liberation Sans", sans-serif;font-size:8.8px;'  stroke="#111" stroke-width="0.15">00:00</text>
<rect x="124.8" y="634" width="381.3" height="9" rx="3.5" fill="url(#gseek)" stroke="#d0d0d0" stroke-width="0.6"/>
<rect x="101.40" y="650.00" width="15.80" height="23.20" fill="#e2e2e2" stroke="#b4b4b4" stroke-width="0.9"/>
<rect x="119.40" y="650.00" width="15.20" height="23.20" fill="#e2e2e2" stroke="#b4b4b4" stroke-width="0.9"/>
<rect x="136.50" y="650.00" width="15.20" height="23.20" fill="#e2e2e2" stroke="#b4b4b4" stroke-width="0.9"/>
<rect x="153.40" y="650.00" width="15.40" height="23.20" fill="#e2e2e2" stroke="#b4b4b4" stroke-width="0.9"/>
<rect x="178.40" y="650.00" width="15.30" height="23.20" fill="#e2e2e2" stroke="#b4b4b4" stroke-width="0.9"/>
<rect x="195.50" y="650.00" width="15.50" height="23.20" fill="#d4d4d4" stroke="#d4d4d4" stroke-width="0.8"/>
<ellipse cx="109.3" cy="661.8" rx="4.3" ry="5.6" fill="#ee0000"/>
<g fill="#6e6e6e"><rect x="121.3" y="657.2" width="11.4" height="10.6" rx="1.3"/><rect x="124.3" y="655.3" width="5.4" height="2.6"/></g><ellipse cx="127" cy="662.6" rx="2.8" ry="3.3" fill="#e2e2e2"/><ellipse cx="127" cy="662.6" rx="1.3" ry="1.7" fill="#6e6e6e"/>
<path d="M139.8 661.5 v-5 h7.5 v2.6 M145.7 657.6 l1.6 2.4 l1.6 -2.4z" fill="none" stroke="#6e6e6e" stroke-width="1.3"/>
<text x="139.00" y="669.80" textLength="3.60" lengthAdjust="spacingAndGlyphs" fill="#6e6e6e" style='font-family:"Liberation Sans", sans-serif;font-size:7px;font-weight:bold;'  stroke="#6e6e6e" stroke-width="0.18">A</text>
<text x="145.00" y="669.80" textLength="3.60" lengthAdjust="spacingAndGlyphs" fill="#6e6e6e" style='font-family:"Liberation Sans", sans-serif;font-size:7px;font-weight:bold;'  stroke="#6e6e6e" stroke-width="0.18">B</text>
<g fill="#6e6e6e"><rect x="156.3" y="655.5" width="2" height="12.6"/><path d="M159.6 655.5 L166.3 661.8 L159.6 668.1Z"/></g>
<g><rect x="181.3" y="655" width="9.2" height="13.5" rx="1.4" fill="#6e6e6e"/><rect x="183" y="657.3" width="1.6" height="1.8" fill="#e8e8e8"/><rect x="185.4" y="657.3" width="3.4" height="1.8" fill="#e8e8e8"/><rect x="183" y="660.9" width="5.8" height="1.9" fill="#e8e8e8"/><rect x="183" y="664.6" width="5.8" height="1.9" fill="#e8e8e8"/></g>
<g><rect x="198.6" y="655" width="9.2" height="13.5" rx="1.4" fill="#dcdcdc"/><rect x="200.3" y="657.3" width="5.8" height="1.8" fill="#cacaca"/><rect x="200.3" y="660.9" width="5.8" height="1.9" fill="#cacaca"/><rect x="200.3" y="664.6" width="5.8" height="1.9" fill="#cacaca"/></g>
<rect x="212.00" y="649.30" width="27.80" height="24.30" fill="#f4f4f4" stroke="#dcdcdc" stroke-width="0.8"/>
<text x="215.20" y="665.60" textLength="11.10" lengthAdjust="spacingAndGlyphs" fill="#7c7c7c" style='font-family:"Liberation Sans", sans-serif;font-size:8.8px;' >100</text>
<rect x="229.70" y="651.20" width="8.30" height="20.80" fill="#fafafa" stroke="#e2e2e2" stroke-width="0.6"/>
<path d="M232 657.3 l1.9 -2.6 l1.9 2.6z M232 665.3 l1.9 2.6 l1.9 -2.6z" fill="#555"/>
<rect x="241.40" y="650.00" width="15.20" height="23.20" fill="#cfcfcf" stroke="#c6c6c6" stroke-width="0.8"/>
<ellipse cx="249.0" cy="661.7" rx="4.7" ry="6.6" fill="#a6a6a6" stroke="#7a7a7a" stroke-width="0.9"/>
<rect x="258.50" y="650.00" width="15.20" height="23.20" fill="#cfcfcf" stroke="#c6c6c6" stroke-width="0.8"/>
<ellipse cx="266.1" cy="661.7" rx="4.7" ry="6.6" fill="#989898" stroke="#7a7a7a" stroke-width="0.9"/>
<rect x="275.70" y="650.00" width="15.20" height="23.20" fill="#cfcfcf" stroke="#c6c6c6" stroke-width="0.8"/>
<ellipse cx="283.3" cy="661.7" rx="4.7" ry="6.6" fill="#8a8a8a" stroke="#7a7a7a" stroke-width="0.9"/>
<rect x="292.70" y="650.00" width="15.20" height="23.20" fill="#cfcfcf" stroke="#c6c6c6" stroke-width="0.8"/>
<ellipse cx="300.3" cy="661.7" rx="4.7" ry="6.6" fill="#f4f4f4" stroke="#7a7a7a" stroke-width="0.9"/>
<rect x="310.00" y="650.00" width="15.20" height="23.20" fill="#cfcfcf" stroke="#c6c6c6" stroke-width="0.8"/>
<ellipse cx="317.6" cy="661.7" rx="4.7" ry="6.6" fill="#848484" stroke="#7a7a7a" stroke-width="0.9"/>
<rect x="94.00" y="676.70" width="19.60" height="28.40" fill="#e2e2e2" stroke="#b4b4b4" stroke-width="0.9"/>
<g fill="#6e6e6e"><rect x="98.8" y="682.5" width="3.3" height="17"/><rect x="105.3" y="682.5" width="3.3" height="17"/></g>
<rect x="123.00" y="679.20" width="15.30" height="23.30" fill="#e2e2e2" stroke="#b4b4b4" stroke-width="0.9"/>
<rect x="140.20" y="679.20" width="15.40" height="23.30" fill="#e2e2e2" stroke="#b4b4b4" stroke-width="0.9"/>
<rect x="157.30" y="679.20" width="15.20" height="23.30" fill="#e2e2e2" stroke="#b4b4b4" stroke-width="0.9"/>
<rect x="182.30" y="679.20" width="15.10" height="23.30" fill="#e2e2e2" stroke="#b4b4b4" stroke-width="0.9"/>
<rect x="199.40" y="679.20" width="15.40" height="23.30" fill="#e2e2e2" stroke="#b4b4b4" stroke-width="0.9"/>
<rect x="224.50" y="679.20" width="15.20" height="23.30" fill="#e2e2e2" stroke="#b4b4b4" stroke-width="0.9"/>
<rect x="241.40" y="679.20" width="15.60" height="23.30" fill="#cce4f7" stroke="#0f62c0" stroke-width="1.3"/>
<rect x="259.20" y="679.20" width="15.10" height="23.30" fill="#e2e2e2" stroke="#b4b4b4" stroke-width="0.9"/>
<g fill="#6e6e6e"><rect x="125.7" y="686.3" width="1.6" height="9.4"/><path d="M131.6 686.3 L127.6 691 L131.6 695.7Z"/><path d="M135.8 686.3 L131.8 691 L135.8 695.7Z"/></g>
<rect x="144.6" y="686" width="6.6" height="9.8" fill="#6e6e6e"/>
<g fill="#6e6e6e"><rect x="168.3" y="686.3" width="1.6" height="9.4"/><path d="M160 686.3 L164 691 L160 695.7Z"/><path d="M164.2 686.3 L168.2 691 L164.2 695.7Z"/></g>
<path d="M185.4 688.6 v-3.4 h3.2 M191.4 685.2 h3.2 v3.4 M194.6 693.6 v3.4 h-3.2 M188.6 697 h-3.2 v-3.4" fill="none" stroke="#6e6e6e" stroke-width="2"/>
<g stroke="#6e6e6e" stroke-width="1.7" fill="#6e6e6e"><line x1="203" y1="684.5" x2="203" y2="697.5"/><line x1="207.3" y1="684.5" x2="207.3" y2="697.5"/><line x1="211.6" y1="684.5" x2="211.6" y2="697.5"/><rect x="201.6" y="687" width="2.8" height="3" stroke="none"/><rect x="205.9" y="692.4" width="2.8" height="3" stroke="none"/><rect x="210.2" y="688.6" width="2.8" height="3" stroke="none"/></g>
<g stroke="#6e6e6e" stroke-width="2"><line x1="227.8" y1="685.6" x2="237" y2="685.6"/><line x1="227.8" y1="690.6" x2="237" y2="690.6"/><line x1="227.8" y1="695.6" x2="232.8" y2="695.6"/></g><path d="M234 693.2 l3.2 2.4 l-3.2 2.4z" fill="#6e6e6e"/>
<path d="M246.3 690.5 v-2 q0 -1.8 1.8 -1.8 h4.2 M253.9 693.5 v2 q0 1.8 -1.8 1.8 h-4.2" fill="none" stroke="#6e6e6e" stroke-width="2"/><path d="M251.6 684 l3.4 2.7 l-3.4 2.7z M248.6 694.6 l-3.4 2.7 l3.4 2.7z" fill="#6e6e6e"/>
<path d="M262.6 685.2 L269.6 696.6 M262.6 697 L269.8 685.6" fill="none" stroke="#6e6e6e" stroke-width="1.8"/><path d="M267.6 684.4 h3.4 v4z M267.4 697.8 h3.6 v-4.4z" fill="#6e6e6e"/>
<path d="M470.8 693.6 L467.6 696.8 L465.6 696.8 L465.6 701.2 L467.6 701.2 L470.8 704.4Z" fill="#707070"/><rect x="469.4" y="696.8" width="1.8" height="4.4" fill="#f4a63c"/>
<path d="M479.6 704 L526.3 683.6 L526.3 704Z" fill="#f0f0f0" stroke="#727272" stroke-width="1.3" stroke-linejoin="round"/>
<path d="M480.4 703.5 L491.3 698.7 L491.3 703.5Z" fill="#5cc85c"/>
<text x="484.00" y="691.60" textLength="13.00" lengthAdjust="spacingAndGlyphs" fill="#707070" style='font-family:"Liberation Sans", sans-serif;font-size:7px;' >32%</text>
<rect x="536.90" y="699.30" width="1.10" height="1.10" fill="#b4b4b4" />
<rect x="536.90" y="701.50" width="1.10" height="1.10" fill="#b4b4b4" />
<rect x="535.20" y="701.50" width="1.10" height="1.10" fill="#b4b4b4" />
<rect x="536.90" y="703.70" width="1.10" height="1.10" fill="#b4b4b4" />
<rect x="535.20" y="703.70" width="1.10" height="1.10" fill="#b4b4b4" />
<rect x="533.50" y="703.70" width="1.10" height="1.10" fill="#b4b4b4" />
</svg>
</body></html>
